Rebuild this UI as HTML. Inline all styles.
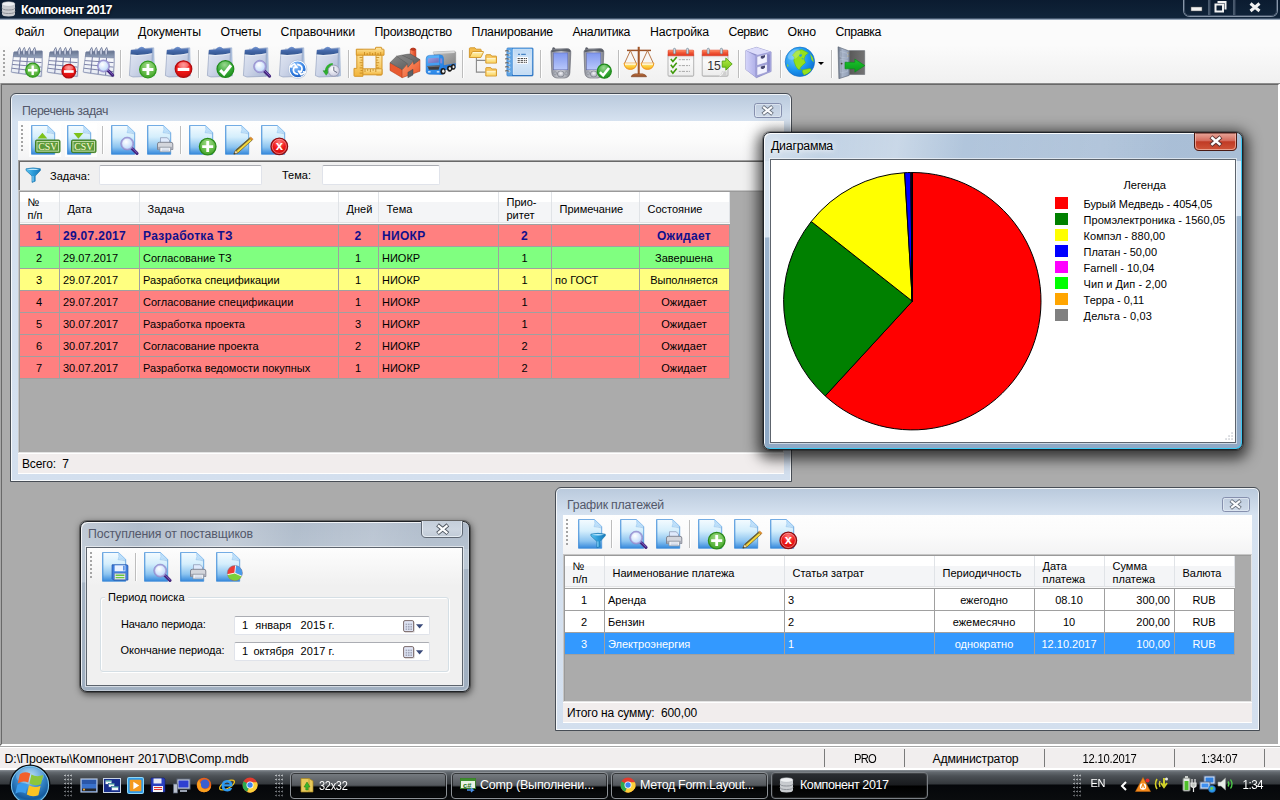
<!DOCTYPE html>
<html lang="ru"><head><meta charset="utf-8"><title>Компонент 2017</title>
<style>
html,body{margin:0;padding:0}
body{width:1280px;height:800px;overflow:hidden;position:relative;background:#ababab;font-family:"Liberation Sans",sans-serif;font-size:11px;color:#000}
div,span{position:absolute;box-sizing:border-box}
svg{position:absolute;left:0;top:0;display:block;overflow:visible}
.tx{white-space:nowrap;line-height:14px}
.t11{font-size:11px}
.t12s{font-size:12px;letter-spacing:-0.2px}
.ttl{font-size:12.5px;color:#fff;font-weight:bold;letter-spacing:-0.45px;text-shadow:0 0 3px #000}
.menu{font-size:12.3px;color:#000;letter-spacing:-0.1px}
.wt{font-size:12.3px;color:#53586a;letter-spacing:-0.45px}
.st{font-size:12.3px;letter-spacing:-0.25px}
.ctr{text-align:center}
#titlebar{left:0;top:0;width:1280px;height:18px;background:linear-gradient(#0b1b30,#10243a)}
#titleline{left:0;top:18px;width:1280px;height:2px;background:#97a7ba;border-top:1px solid #42556c}
#menubar{left:0;top:20px;width:1280px;height:25px;background:#fbfbfb}
#toolbar{left:0;top:45px;width:1280px;height:38px;background:linear-gradient(#fbfbfb,#f0f0f0)}
#mdi{left:0;top:83px;width:1280px;height:663px;background:#ababab;border-style:solid;border-width:2px;border-color:#696969 #fff #fff #696969;box-shadow:inset 0 0 0 0 #000}
#mdi:before{content:"";position:absolute;left:-2px;top:-2px;width:1280px;height:1px;background:#8c8c8c}
#mdi:after{content:"";position:absolute;left:-2px;top:-2px;width:1px;height:661px;background:#a8a8a8}
.grip{width:2px;background:repeating-linear-gradient(#a5a5a5 0 2px,transparent 2px 4px)}
.tsep{width:2px;border-left:1px solid #bdbdbd;border-right:1px solid #fff}
.win{border:1px solid #474d55;border-radius:6px}
.win.inact{border-radius:6px 6px 0 0}
.win.inact{background:linear-gradient(#b9c9dc,#d6e2f0 27px,#d3dfee);box-shadow:inset 0 0 0 1px rgba(255,255,255,.8)}
.win.inact2{border-radius:7px;border-color:#1f2226;background:linear-gradient(100deg,rgba(255,255,255,.2),rgba(255,255,255,0) 15%,rgba(255,255,255,.22) 38%,rgba(255,255,255,0) 55%,rgba(255,255,255,.12) 75%,rgba(255,255,255,0) 90%) 0 0/100% 27px no-repeat,linear-gradient(#b0bccb,#b6c2d0) 0 0/100% 27px no-repeat,linear-gradient(178deg,#c2cdd9 0,#bcc8d5 60px,#a6b4c4 61px,#a0afc0 100%);box-shadow:inset 1px 1px 0 rgba(255,255,255,.8),inset -1px -1px 0 rgba(255,255,255,.35),0 0 0 1px rgba(0,0,0,.3),1px 2px 6px 1px rgba(0,0,0,.5)}
.win.act{border-radius:7px;border-color:#1f2329;background:linear-gradient(100deg,rgba(255,255,255,.3),rgba(255,255,255,.08) 12%,rgba(255,255,255,.28) 28%,rgba(255,255,255,0) 42%,rgba(255,255,255,.1) 70%,rgba(255,255,255,0) 85%) 0 0/100% 28px no-repeat,linear-gradient(90deg,#c3d4e6,#b4c8de 30%,#aabfd7 70%,#a9bed6) 0 0/100% 28px no-repeat,linear-gradient(177.4deg,#dde9f5 0,#d6e3f1 104px,#9db5cf 105px,#8fa9c6 75%);box-shadow:inset 1px 1px 0 rgba(255,255,255,.9),inset -1px -1px 0 #3cc8f2,0 0 0 1px rgba(0,0,0,.25),0 4px 14px 5px rgba(0,0,0,.68)}
.client{background:#f0f0f0}
.client.bord{border:1px solid #5d646d;box-shadow:0 0 0 1px rgba(255,255,255,.55)}
.wtb{background:linear-gradient(#fefefe,#fbfbfb 50%,#f3f3f4)}
.wtb2{background:linear-gradient(#fdfdfd,#f0f0f0)}
.fpanel{background:#f0f0f0;border:1px solid;border-color:#a0a0a0 #fff #fff #a0a0a0;box-shadow:inset 1px 1px 0 #696969}
.inp{background:#fff;border:1px solid #e0e3ea;border-top-color:#abadb3;border-radius:2px}
.grid{background:#ababab;border:1px solid;border-color:#c6c6c6 #e3e3e3 #e3e3e3 #c6c6c6;box-shadow:inset 1px 1px 0 #9a9a9a}
.ghdr{background:linear-gradient(#fff 0 10px,#f4f5f7 10px 30px,#e2e3e5 30px 31px,#fafafa 31px);border-bottom:1px solid #a0a0a0}
.gh{font-size:11px;border-right:1px solid #e0e3e7}
.gh span{left:7.5px;top:11px;line-height:13px;white-space:nowrap}
.gh.two span{top:4px}
.gc{font-size:11px;border-right:1px solid #a0a0a0;border-bottom:1px solid #a0a0a0;overflow:hidden}
.gc span{top:4.5px;line-height:13px;white-space:nowrap}
.gc.l span{left:3px}
.gc.c span{left:0;right:1px;text-align:center}
.gc.r span{right:4px}
.sel1{font-weight:bold;color:#10108c}
.sel1 span{font-size:12px;letter-spacing:.3px}
.sel2{color:#fff}
.wstat{background:#f1eded;border-top:1px solid #fff;border-bottom:1px solid #fff}
.gbox{border:1px solid #d5dfe5;border-radius:3px;box-shadow:inset 1px 1px 0 #fff, 1px 1px 0 #fff}
#statusbar{left:0;top:746px;width:1280px;height:24px;background:#f1eeee;border-top:1px solid #a8a8a8;border-bottom:2px solid #fff;box-shadow:inset 0 1px 0 #fff}
.ssep{width:1px;height:18px;background:#7a7a7a}
#taskbar{left:0;top:770px;width:1280px;height:30px;background:linear-gradient(#8a9096 0,#646a70 2px,#4c5156 6px,#34383c 14px,#05070a 15px,#0a0c0e 100%)}
.tgrip{width:9px;height:24px;background:radial-gradient(circle at 1.2px 1.5px,#b4b8bc 0.8px,transparent 1.2px);background-size:3px 4px;-webkit-mask-image:linear-gradient(#000,rgba(0,0,0,.45))}
.tbtn{border:1px solid #8c9196;border-radius:4px;background:linear-gradient(#787d82,#55595e 12px,#3e4246 13px,#020304 14px,#0a0c0e);box-shadow:inset 0 0 0 1px rgba(0,0,0,.55)}
.tbtn.on{border-color:#7a7f84;background:linear-gradient(#2c2f33,#1a1c1f 12px,#000 13px,#08090a);box-shadow:inset 0 0 0 1px rgba(255,255,255,.1)}
.tb{color:#fff;font-size:12.5px;letter-spacing:-0.35px}

</style></head>
<body>
<svg width="0" height="0" style="position:absolute"><defs>
<linearGradient id="gDoc" x1="0" y1="0" x2="0" y2="1"><stop offset="0" stop-color="#f4fbff"/><stop offset=".4" stop-color="#d4eefc"/><stop offset=".75" stop-color="#8cc4f0"/><stop offset="1" stop-color="#3488dc"/></linearGradient>
<radialGradient id="gGreen" cx=".4" cy=".3" r=".8"><stop offset="0" stop-color="#9be07a"/><stop offset=".6" stop-color="#3fae2a"/><stop offset="1" stop-color="#1f7d16"/></radialGradient>
<radialGradient id="gRed" cx=".4" cy=".3" r=".8"><stop offset="0" stop-color="#ff8a8a"/><stop offset=".55" stop-color="#ee1c24"/><stop offset="1" stop-color="#a80d12"/></radialGradient>
<radialGradient id="gBlueB" cx=".4" cy=".3" r=".8"><stop offset="0" stop-color="#9ccbff"/><stop offset=".6" stop-color="#2f7de0"/><stop offset="1" stop-color="#1248a8"/></radialGradient>
<radialGradient id="gLens" cx=".4" cy=".35" r=".7"><stop offset="0" stop-color="#ffffff"/><stop offset="1" stop-color="#b9d6fb"/></radialGradient>
<linearGradient id="gClip" x1="0" y1="0" x2="1" y2="1"><stop offset="0" stop-color="#e4e9f4"/><stop offset=".5" stop-color="#cdd5e8"/><stop offset="1" stop-color="#a9b6d4"/></linearGradient>
<linearGradient id="gCal" x1="0" y1="0" x2="0" y2="1"><stop offset="0" stop-color="#ffffff"/><stop offset="1" stop-color="#e4e9f2"/></linearGradient>
<linearGradient id="gGold" x1="0" y1="0" x2="0" y2="1"><stop offset="0" stop-color="#ffe9a6"/><stop offset="1" stop-color="#f2b43a"/></linearGradient>
<linearGradient id="gPda" x1="0" y1="0" x2="1" y2="0"><stop offset="0" stop-color="#8d9099"/><stop offset=".5" stop-color="#d9dbe0"/><stop offset="1" stop-color="#7d808a"/></linearGradient>
<linearGradient id="gScr" x1="0" y1="0" x2="0" y2="1"><stop offset="0" stop-color="#7f97ee"/><stop offset="1" stop-color="#b9c8fb"/></linearGradient>
<radialGradient id="gGlobe" cx=".35" cy=".35" r=".8"><stop offset="0" stop-color="#6cc8fc"/><stop offset=".55" stop-color="#1a96f0"/><stop offset="1" stop-color="#0a62c8"/></radialGradient>
<linearGradient id="gCab" x1="0" y1="0" x2="1" y2="0"><stop offset="0" stop-color="#d4d4fa"/><stop offset="1" stop-color="#b0b0e8"/></linearGradient>
<linearGradient id="gRedTop" x1="0" y1="0" x2="0" y2="1"><stop offset="0" stop-color="#ff7a50"/><stop offset="1" stop-color="#e0311a"/></linearGradient>
<linearGradient id="gCloseRed" x1="0" y1="0" x2="0" y2="1"><stop offset="0" stop-color="#e9a79b"/><stop offset=".45" stop-color="#d3695a"/><stop offset=".5" stop-color="#c03a25"/><stop offset="1" stop-color="#d0563a"/></linearGradient>
<linearGradient id="gOrb" x1="0" y1="0" x2="0" y2="1"><stop offset="0" stop-color="#8fc4f2"/><stop offset=".5" stop-color="#2a6fc4"/><stop offset="1" stop-color="#1a3f86"/></linearGradient>
<radialGradient id="gGreen2" cx=".5" cy=".3" r=".75"><stop offset="0" stop-color="#a4dc8c"/><stop offset=".7" stop-color="#58b43c"/><stop offset="1" stop-color="#3f9a28"/></radialGradient>
<radialGradient id="gRed2" cx=".5" cy=".25" r=".8"><stop offset="0" stop-color="#ff7a7a"/><stop offset=".5" stop-color="#f01818"/><stop offset="1" stop-color="#c80a0a"/></radialGradient>
<linearGradient id="gFun" x1="0" y1="0" x2="1" y2="0"><stop offset="0" stop-color="#5cc4f0"/><stop offset=".5" stop-color="#2a9ad8"/><stop offset="1" stop-color="#1a7ab8"/></linearGradient>
<radialGradient id="gGreen3" cx=".45" cy=".25" r=".8"><stop offset="0" stop-color="#9ad890"/><stop offset=".6" stop-color="#34a834"/><stop offset="1" stop-color="#1c8a1c"/></radialGradient>
<radialGradient id="gClock" cx=".4" cy=".35" r=".7"><stop offset="0" stop-color="#ffffff"/><stop offset="1" stop-color="#c4c6dc"/></radialGradient>
<linearGradient id="gCalBand" x1="0" y1="0" x2="0" y2="1"><stop offset="0" stop-color="#66748f"/><stop offset="1" stop-color="#94a2bc"/></linearGradient>
<linearGradient id="gClipBand" x1="0" y1="0" x2="0" y2="1"><stop offset="0" stop-color="#7a9ad4"/><stop offset=".5" stop-color="#4468aa"/><stop offset="1" stop-color="#33558f"/></linearGradient>
<linearGradient id="gChim" x1="0" y1="0" x2="1" y2="0"><stop offset="0" stop-color="#ff8a60"/><stop offset="1" stop-color="#d8401e"/></linearGradient>
<linearGradient id="gFact" x1="0" y1="0" x2="1" y2="1"><stop offset="0" stop-color="#ff9a6c"/><stop offset="1" stop-color="#e85228"/></linearGradient>
<linearGradient id="gRoof" x1="0" y1="0" x2="1" y2="1"><stop offset="0" stop-color="#8c8c8c"/><stop offset="1" stop-color="#545454"/></linearGradient>
<linearGradient id="gBox" x1="0" y1="0" x2="1" y2="1"><stop offset="0" stop-color="#c4c4c4"/><stop offset="1" stop-color="#7e7e7e"/></linearGradient>
<linearGradient id="gCab2" x1="0" y1="0" x2="0" y2="1"><stop offset="0" stop-color="#5cb4fa"/><stop offset="1" stop-color="#2a86e8"/></linearGradient>
<linearGradient id="gWind" x1="0" y1="0" x2="1" y2="1"><stop offset="0" stop-color="#a0a0e0"/><stop offset="1" stop-color="#6a6ab8"/></linearGradient>
<linearGradient id="gFold" x1="0" y1="0" x2="0" y2="1"><stop offset="0" stop-color="#fff2b8"/><stop offset="1" stop-color="#fad460"/></linearGradient>
<linearGradient id="gNbCover" x1="0" y1="0" x2="0" y2="1"><stop offset="0" stop-color="#3c8ede"/><stop offset="1" stop-color="#2f7acc"/></linearGradient>
<linearGradient id="gNbPage" x1="0" y1="0" x2="0" y2="1"><stop offset="0" stop-color="#bcd8f4"/><stop offset=".5" stop-color="#d8e8f8"/><stop offset="1" stop-color="#c4dcf4"/></linearGradient>
<radialGradient id="gPdaBtn" cx=".5" cy=".4" r=".6"><stop offset="0" stop-color="#f4f4f8"/><stop offset="1" stop-color="#a0a4b0"/></radialGradient>
<linearGradient id="gBrown" x1="0" y1="0" x2="0" y2="1"><stop offset="0" stop-color="#c47a48"/><stop offset="1" stop-color="#8a4420"/></linearGradient>
<linearGradient id="gPan" x1="0" y1="0" x2="0" y2="1"><stop offset="0" stop-color="#fff0a0"/><stop offset=".5" stop-color="#fcd040"/><stop offset="1" stop-color="#f8a820"/></linearGradient>
<linearGradient id="gPaper" x1="0" y1="0" x2="0" y2="1"><stop offset="0" stop-color="#e4e4e4"/><stop offset=".3" stop-color="#fafafa"/><stop offset="1" stop-color="#ececec"/></linearGradient>
<linearGradient id="gArrowG" x1="0" y1="0" x2="0" y2="1"><stop offset="0" stop-color="#b4ec4a"/><stop offset="1" stop-color="#6cc010"/></linearGradient>
<linearGradient id="gArrowG2" x1="0" y1="0" x2="0" y2="1"><stop offset="0" stop-color="#1cc42c"/><stop offset="1" stop-color="#0a9a1a"/></linearGradient>
<linearGradient id="gDoorIn" x1="0" y1="0" x2="1" y2="0"><stop offset="0" stop-color="#585858"/><stop offset="1" stop-color="#747474"/></linearGradient>
<linearGradient id="gDoorLeaf" x1="0" y1="0" x2="1" y2="0"><stop offset="0" stop-color="#6a7484"/><stop offset=".4" stop-color="#a8b4c8"/><stop offset="1" stop-color="#8e9cb4"/></linearGradient>
<linearGradient id="gCloseIn" x1="0" y1="0" x2="0" y2="1"><stop offset="0" stop-color="#bfcddf"/><stop offset="1" stop-color="#cfdae9"/></linearGradient>
<linearGradient id="gCloseIn2" x1="0" y1="0" x2="0" y2="1"><stop offset="0" stop-color="#c4ceda"/><stop offset=".5" stop-color="#ccd5e0"/><stop offset="1" stop-color="#c0cad6"/></linearGradient>
</defs></svg>
<div id="titlebar"></div><div id="titleline"></div>
<div style="left:2px;top:1px;width:15px;height:16px"><svg width="15" height="16" viewBox="1 0 15 16" ><path d="M1 3 V13 Q1 15.5 7.5 15.5 Q14 15.5 14 13 V3 Z" fill="#c9ccd0"/><path d="M1 6.8 Q1 9 7.5 9 Q14 9 14 6.8 M1 10.3 Q1 12.5 7.5 12.5 Q14 12.5 14 10.3" fill="none" stroke="#8e9298" stroke-width="1"/><ellipse cx="7.5" cy="3" rx="6.5" ry="2.3" fill="#eef0f2" stroke="#a9adb3" stroke-width=".5"/></svg></div>
<span class="tx ttl" style="left:21px;top:3px;letter-spacing:-0.571px;">Компонент 2017</span>
<div style="left:1183px;top:-2px;width:95px;height:19px"><svg width="95" height="19" viewBox="0 0 95 19" ><path d="M0.5 0 V12 Q0.5 18.5 7 18.5 H88 Q94.5 18.5 94.5 12 V0" fill="none" stroke="#8796a8" stroke-width="1"/><path d="M1.5 0 V12 Q1.5 17.5 7 17.5 H88 Q93.5 17.5 93.5 12 V0" fill="none" stroke="#3d4d63" stroke-width="1"/><path d="M26 0 V17 M51 0 V17" stroke="#8796a8" stroke-width="1"/><path d="M27 0 V17 M52 0 V17" stroke="#3d4d63" stroke-width="1"/><rect x="8" y="9" width="11" height="4" fill="#f2f2f2" stroke="#555" stroke-width=".5"/><path d="M34.5 4 H42.5 V11.5 M32.5 6.5 H40 V13.5 H32.5 Z" fill="none" stroke="#f2f2f2" stroke-width="2"/><path d="M67.5 5.5 L76.5 13 M76.5 5.5 L67.5 13" stroke="#f2f2f2" stroke-width="3"/></svg></div>
<div id="menubar"></div>
<span class="tx menu" style="left:15px;top:25px;letter-spacing:-0.309px;">Файл</span>
<span class="tx menu" style="left:63.5px;top:25px;letter-spacing:-0.254px;">Операции</span>
<span class="tx menu" style="left:138px;top:25px;letter-spacing:-0.043px;">Документы</span>
<span class="tx menu" style="left:220.5px;top:25px;letter-spacing:-0.336px;">Отчеты</span>
<span class="tx menu" style="left:280.5px;top:25px;letter-spacing:0.000px;">Справочники</span>
<span class="tx menu" style="left:374.5px;top:25px;letter-spacing:-0.224px;">Производство</span>
<span class="tx menu" style="left:471.5px;top:25px;letter-spacing:-0.203px;">Планирование</span>
<span class="tx menu" style="left:572.5px;top:25px;letter-spacing:-0.375px;">Аналитика</span>
<span class="tx menu" style="left:650px;top:25px;letter-spacing:-0.172px;">Настройка</span>
<span class="tx menu" style="left:728.5px;top:25px;letter-spacing:-0.435px;">Сервис</span>
<span class="tx menu" style="left:787.5px;top:25px;letter-spacing:-0.020px;">Окно</span>
<span class="tx menu" style="left:835.5px;top:25px;letter-spacing:-0.393px;">Справка</span>
<div id="toolbar"></div>
<div class="grip" style="left:3px;top:50px;height:26px"></div>
<div style="left:10px;top:47px;width:34px;height:32px"><svg width="34" height="32" viewBox="0 0 34 32" ><path d="M5 6 L33 5 L32.2 29.8 L31.1 30.3 L2 26 Z" fill="#8a94b0" opacity=".45"/><path d="M4 5 L32.1 4 Q32.6 17 31.1 29.3 L1.2 25.1 Z" fill="url(#gCal)" stroke="#7d86aa" stroke-width=".7"/><path d="M10.4 10.0 L8.7 26.2" stroke="#686e9c" stroke-width=".9"/><path d="M17.4 10.3 L16.1 27.2" stroke="#686e9c" stroke-width=".9"/><path d="M24.5 10.7 L23.6 28.2" stroke="#686e9c" stroke-width=".9"/><path d="M2.8 13.6 L31.5 15.6" stroke="#70769f" stroke-width=".9"/><path d="M2.2 17.4 L31.4 20.1" stroke="#70769f" stroke-width=".9"/><path d="M1.7 21.2 L31.2 24.7" stroke="#70769f" stroke-width=".9"/><path d="M4 5 L32.1 4 L31.7 11 L3.3 9.7 Z" fill="url(#gCalBand)" stroke="#6a7696" stroke-width=".5"/><path d="M7.9 7.6 Q7.3 2.6 9.7 0.5 Q11.1 2.4 10.5 7.4" fill="#aab4cc" stroke="#5e6a8a" stroke-width=".8"/><path d="M9.1 6.6 Q8.7 3.2 9.8 1.6" fill="none" stroke="#eef1f8" stroke-width=".7"/><path d="M12.6 7.6 Q12.0 2.6 14.4 0.5 Q15.8 2.4 15.2 7.4" fill="#aab4cc" stroke="#5e6a8a" stroke-width=".8"/><path d="M13.8 6.6 Q13.4 3.2 14.5 1.6" fill="none" stroke="#eef1f8" stroke-width=".7"/><path d="M17.8 7.6 Q17.2 2.6 19.6 0.5 Q21.0 2.4 20.4 7.4" fill="#aab4cc" stroke="#5e6a8a" stroke-width=".8"/><path d="M19.0 6.6 Q18.6 3.2 19.7 1.6" fill="none" stroke="#eef1f8" stroke-width=".7"/><path d="M22.9 7.6 Q22.3 2.6 24.7 0.5 Q26.1 2.4 25.5 7.4" fill="#aab4cc" stroke="#5e6a8a" stroke-width=".8"/><path d="M24.1 6.6 Q23.7 3.2 24.8 1.6" fill="none" stroke="#eef1f8" stroke-width=".7"/><circle cx="22.7" cy="23.2" r="7.0" fill="url(#gGreen2)" stroke="#2f9a1c" stroke-width="1.2"/><path d="M17.988 23.2H27.412M22.7 18.488V27.912" stroke="#fff" stroke-width="2.36"/></svg></div>
<div style="left:46px;top:47px;width:34px;height:32px"><svg width="34" height="32" viewBox="0 0 34 32" ><path d="M5 6 L33 5 L32.2 29.8 L31.1 30.3 L2 26 Z" fill="#8a94b0" opacity=".45"/><path d="M4 5 L32.1 4 Q32.6 17 31.1 29.3 L1.2 25.1 Z" fill="url(#gCal)" stroke="#7d86aa" stroke-width=".7"/><path d="M10.4 10.0 L8.7 26.2" stroke="#686e9c" stroke-width=".9"/><path d="M17.4 10.3 L16.1 27.2" stroke="#686e9c" stroke-width=".9"/><path d="M24.5 10.7 L23.6 28.2" stroke="#686e9c" stroke-width=".9"/><path d="M2.8 13.6 L31.5 15.6" stroke="#70769f" stroke-width=".9"/><path d="M2.2 17.4 L31.4 20.1" stroke="#70769f" stroke-width=".9"/><path d="M1.7 21.2 L31.2 24.7" stroke="#70769f" stroke-width=".9"/><path d="M4 5 L32.1 4 L31.7 11 L3.3 9.7 Z" fill="url(#gCalBand)" stroke="#6a7696" stroke-width=".5"/><path d="M7.9 7.6 Q7.3 2.6 9.7 0.5 Q11.1 2.4 10.5 7.4" fill="#aab4cc" stroke="#5e6a8a" stroke-width=".8"/><path d="M9.1 6.6 Q8.7 3.2 9.8 1.6" fill="none" stroke="#eef1f8" stroke-width=".7"/><path d="M12.6 7.6 Q12.0 2.6 14.4 0.5 Q15.8 2.4 15.2 7.4" fill="#aab4cc" stroke="#5e6a8a" stroke-width=".8"/><path d="M13.8 6.6 Q13.4 3.2 14.5 1.6" fill="none" stroke="#eef1f8" stroke-width=".7"/><path d="M17.8 7.6 Q17.2 2.6 19.6 0.5 Q21.0 2.4 20.4 7.4" fill="#aab4cc" stroke="#5e6a8a" stroke-width=".8"/><path d="M19.0 6.6 Q18.6 3.2 19.7 1.6" fill="none" stroke="#eef1f8" stroke-width=".7"/><path d="M22.9 7.6 Q22.3 2.6 24.7 0.5 Q26.1 2.4 25.5 7.4" fill="#aab4cc" stroke="#5e6a8a" stroke-width=".8"/><path d="M24.1 6.6 Q23.7 3.2 24.8 1.6" fill="none" stroke="#eef1f8" stroke-width=".7"/><circle cx="22.8" cy="24.2" r="6.800000000000001" fill="url(#gRed2)" stroke="#b00c10" stroke-width="1.2"/><ellipse cx="22.8" cy="20.869999999999997" rx="4.44" ry="2.3680000000000003" fill="#fff" opacity=".25"/><path d="M17.916 24.5H27.684" stroke="#fff" stroke-width="2.66"/></svg></div>
<div style="left:82px;top:47px;width:34px;height:32px"><svg width="34" height="32" viewBox="0 0 34 32" ><path d="M5 6 L33 5 L32.2 29.8 L31.1 30.3 L2 26 Z" fill="#8a94b0" opacity=".45"/><path d="M4 5 L32.1 4 Q32.6 17 31.1 29.3 L1.2 25.1 Z" fill="url(#gCal)" stroke="#7d86aa" stroke-width=".7"/><path d="M10.4 10.0 L8.7 26.2" stroke="#686e9c" stroke-width=".9"/><path d="M17.4 10.3 L16.1 27.2" stroke="#686e9c" stroke-width=".9"/><path d="M24.5 10.7 L23.6 28.2" stroke="#686e9c" stroke-width=".9"/><path d="M2.8 13.6 L31.5 15.6" stroke="#70769f" stroke-width=".9"/><path d="M2.2 17.4 L31.4 20.1" stroke="#70769f" stroke-width=".9"/><path d="M1.7 21.2 L31.2 24.7" stroke="#70769f" stroke-width=".9"/><path d="M4 5 L32.1 4 L31.7 11 L3.3 9.7 Z" fill="url(#gCalBand)" stroke="#6a7696" stroke-width=".5"/><path d="M7.9 7.6 Q7.3 2.6 9.7 0.5 Q11.1 2.4 10.5 7.4" fill="#aab4cc" stroke="#5e6a8a" stroke-width=".8"/><path d="M9.1 6.6 Q8.7 3.2 9.8 1.6" fill="none" stroke="#eef1f8" stroke-width=".7"/><path d="M12.6 7.6 Q12.0 2.6 14.4 0.5 Q15.8 2.4 15.2 7.4" fill="#aab4cc" stroke="#5e6a8a" stroke-width=".8"/><path d="M13.8 6.6 Q13.4 3.2 14.5 1.6" fill="none" stroke="#eef1f8" stroke-width=".7"/><path d="M17.8 7.6 Q17.2 2.6 19.6 0.5 Q21.0 2.4 20.4 7.4" fill="#aab4cc" stroke="#5e6a8a" stroke-width=".8"/><path d="M19.0 6.6 Q18.6 3.2 19.7 1.6" fill="none" stroke="#eef1f8" stroke-width=".7"/><path d="M22.9 7.6 Q22.3 2.6 24.7 0.5 Q26.1 2.4 25.5 7.4" fill="#aab4cc" stroke="#5e6a8a" stroke-width=".8"/><path d="M24.1 6.6 Q23.7 3.2 24.8 1.6" fill="none" stroke="#eef1f8" stroke-width=".7"/><path d="M25.387999999999998 22.887999999999998L30.587999999999997 28.087999999999997" stroke="#46287e" stroke-width="3.2" stroke-linecap="round"/><path d="M25.688 22.587999999999997L30.587999999999997 27.487999999999996" stroke="#7c5cc0" stroke-width="1" stroke-linecap="round"/><circle cx="21.5" cy="19" r="5.4" fill="url(#gLens)" stroke="#a9a4dc" stroke-width="1.5"/><circle cx="21.5" cy="19" r="6.1000000000000005" fill="none" stroke="#7d78c0" stroke-width=".5"/></svg></div>
<div class="tsep" style="left:120px;top:50px;height:28px"></div>
<div style="left:127px;top:47px;width:34px;height:32px"><svg width="34" height="32" viewBox="0 0 34 32" ><path d="M8 2.2 L26.8 0.8 L27.5 28.8 L24.9 29.3 L24.9 3 Z" fill="#b4c6e2" stroke="#8fa4c8" stroke-width=".5"/><path d="M4 3.1 L25.3 1.2 L24.9 29.3 L6 30 L2.4 28.6 Z" fill="url(#gClip)" stroke="#8a98b8" stroke-width=".6"/><path d="M4 3.1 L10.5 2.6 Q12.5 -0.3 14.6 -0.3 Q16.6 -0.3 18.4 1.9 L25.3 1.2 L25.2 6.2 Q15 8.6 3.6 7.6 Z" fill="url(#gClipBand)"/><path d="M3.6 7.6 Q15 8.6 25.2 6.2 L25.2 7.2 Q15 9.6 3.5 8.6Z" fill="#eef2fa" opacity=".7"/><circle cx="20.9" cy="22.5" r="8.3" fill="url(#gGreen2)" stroke="#2f9a1c" stroke-width="1.2"/><path d="M15.381999999999998 22.5H26.418M20.9 16.982V28.018" stroke="#fff" stroke-width="2.76"/></svg></div>
<div style="left:163px;top:47px;width:34px;height:32px"><svg width="34" height="32" viewBox="0 0 34 32" ><path d="M8 2.2 L26.8 0.8 L27.5 28.8 L24.9 29.3 L24.9 3 Z" fill="#b4c6e2" stroke="#8fa4c8" stroke-width=".5"/><path d="M4 3.1 L25.3 1.2 L24.9 29.3 L6 30 L2.4 28.6 Z" fill="url(#gClip)" stroke="#8a98b8" stroke-width=".6"/><path d="M4 3.1 L10.5 2.6 Q12.5 -0.3 14.6 -0.3 Q16.6 -0.3 18.4 1.9 L25.3 1.2 L25.2 6.2 Q15 8.6 3.6 7.6 Z" fill="url(#gClipBand)"/><path d="M3.6 7.6 Q15 8.6 25.2 6.2 L25.2 7.2 Q15 9.6 3.5 8.6Z" fill="#eef2fa" opacity=".7"/><circle cx="20.5" cy="22.1" r="8.3" fill="url(#gRed2)" stroke="#b00c10" stroke-width="1.2"/><ellipse cx="20.5" cy="18.095000000000002" rx="5.34" ry="2.8480000000000003" fill="#fff" opacity=".25"/><path d="M14.626 22.400000000000002H26.374000000000002" stroke="#fff" stroke-width="3.20"/></svg></div>
<div class="tsep" style="left:198px;top:50px;height:28px"></div>
<div style="left:205px;top:47px;width:34px;height:32px"><svg width="34" height="32" viewBox="0 0 34 32" ><path d="M8 2.2 L26.8 0.8 L27.5 28.8 L24.9 29.3 L24.9 3 Z" fill="#b4c6e2" stroke="#8fa4c8" stroke-width=".5"/><path d="M4 3.1 L25.3 1.2 L24.9 29.3 L6 30 L2.4 28.6 Z" fill="url(#gClip)" stroke="#8a98b8" stroke-width=".6"/><path d="M4 3.1 L10.5 2.6 Q12.5 -0.3 14.6 -0.3 Q16.6 -0.3 18.4 1.9 L25.3 1.2 L25.2 6.2 Q15 8.6 3.6 7.6 Z" fill="url(#gClipBand)"/><path d="M3.6 7.6 Q15 8.6 25.2 6.2 L25.2 7.2 Q15 9.6 3.5 8.6Z" fill="#eef2fa" opacity=".7"/><circle cx="20.4" cy="22.1" r="8.4" fill="url(#gGreen3)" stroke="#1f8a1a" stroke-width="1.2"/><path d="M15.18 23.18L19.049999999999997 27.05L25.979999999999997 18.32" fill="none" stroke="#fff" stroke-width="3.06" stroke-linejoin="miter"/></svg></div>
<div style="left:241px;top:47px;width:34px;height:32px"><svg width="34" height="32" viewBox="0 0 34 32" ><path d="M8 2.2 L26.8 0.8 L27.5 28.8 L24.9 29.3 L24.9 3 Z" fill="#b4c6e2" stroke="#8fa4c8" stroke-width=".5"/><path d="M4 3.1 L25.3 1.2 L24.9 29.3 L6 30 L2.4 28.6 Z" fill="url(#gClip)" stroke="#8a98b8" stroke-width=".6"/><path d="M4 3.1 L10.5 2.6 Q12.5 -0.3 14.6 -0.3 Q16.6 -0.3 18.4 1.9 L25.3 1.2 L25.2 6.2 Q15 8.6 3.6 7.6 Z" fill="url(#gClipBand)"/><path d="M3.6 7.6 Q15 8.6 25.2 6.2 L25.2 7.2 Q15 9.6 3.5 8.6Z" fill="#eef2fa" opacity=".7"/><path d="M22.932 23.532L28.531999999999996 29.131999999999998" stroke="#46287e" stroke-width="3.2" stroke-linecap="round"/><path d="M23.232 23.232L28.531999999999996 28.531999999999996" stroke="#7c5cc0" stroke-width="1" stroke-linecap="round"/><circle cx="18.9" cy="19.5" r="5.6" fill="url(#gLens)" stroke="#a9a4dc" stroke-width="1.5"/><circle cx="18.9" cy="19.5" r="6.3" fill="none" stroke="#7d78c0" stroke-width=".5"/></svg></div>
<div style="left:277px;top:47px;width:34px;height:32px"><svg width="34" height="32" viewBox="0 0 34 32" ><path d="M8 2.2 L26.8 0.8 L27.5 28.8 L24.9 29.3 L24.9 3 Z" fill="#b4c6e2" stroke="#8fa4c8" stroke-width=".5"/><path d="M4 3.1 L25.3 1.2 L24.9 29.3 L6 30 L2.4 28.6 Z" fill="url(#gClip)" stroke="#8a98b8" stroke-width=".6"/><path d="M4 3.1 L10.5 2.6 Q12.5 -0.3 14.6 -0.3 Q16.6 -0.3 18.4 1.9 L25.3 1.2 L25.2 6.2 Q15 8.6 3.6 7.6 Z" fill="url(#gClipBand)"/><path d="M3.6 7.6 Q15 8.6 25.2 6.2 L25.2 7.2 Q15 9.6 3.5 8.6Z" fill="#eef2fa" opacity=".7"/><circle cx="20.7" cy="22.3" r="8.5" fill="url(#gBlueB)" stroke="#fff" stroke-width="1.2"/><circle cx="20.7" cy="22.3" r="9.2" fill="none" stroke="#9ab0d0" stroke-width=".5"/><path d="M20.2 17.35 q6.75 0.9 4.05 7.2 l-2.88 -0.45 l2.6999999999999997 3.6 l4.05 -2.6999999999999997 l-2.25 -0.27" fill="none" stroke="#fff" stroke-width="1.7" stroke-linejoin="round"/><path d="M21.2 27.25 q-6.75 -0.9 -4.05 -7.2 l2.88 0.45 l-2.6999999999999997 -3.6 l-4.05 2.6999999999999997 l2.25 0.27" fill="none" stroke="#fff" stroke-width="1.7" stroke-linejoin="round"/></svg></div>
<div style="left:313px;top:47px;width:34px;height:32px"><svg width="34" height="32" viewBox="0 0 34 32" ><path d="M8 2.2 L26.8 0.8 L27.5 28.8 L24.9 29.3 L24.9 3 Z" fill="#b4c6e2" stroke="#8fa4c8" stroke-width=".5"/><path d="M4 3.1 L25.3 1.2 L24.9 29.3 L6 30 L2.4 28.6 Z" fill="url(#gClip)" stroke="#8a98b8" stroke-width=".6"/><path d="M4 3.1 L10.5 2.6 Q12.5 -0.3 14.6 -0.3 Q16.6 -0.3 18.4 1.9 L25.3 1.2 L25.2 6.2 Q15 8.6 3.6 7.6 Z" fill="url(#gClipBand)"/><path d="M3.6 7.6 Q15 8.6 25.2 6.2 L25.2 7.2 Q15 9.6 3.5 8.6Z" fill="#eef2fa" opacity=".7"/><path d="M19.8 17.6 A7.1 7.1 0 0 0 13.200000000000001 24.7" fill="none" stroke="#2fb02f" stroke-width="3.2"/><path d="M10.0 23.7 h6.4 l-3.2 4.6z" fill="#2fb02f" stroke="#1f8a1f" stroke-width=".4"/><circle cx="20.8" cy="23.7" r="5.6" fill="url(#gClock)" stroke="#9a9cb4" stroke-width=".9"/><path d="M20.8 19.78V23.7L24.16 25.66" fill="none" stroke="#666a80" stroke-width="1"/></svg></div>
<div class="tsep" style="left:348px;top:50px;height:28px"></div>
<div style="left:353px;top:47px;width:34px;height:32px"><svg width="34" height="32" viewBox="0 0 34 32" ><rect x="23" y="8" width="6" height="20" rx=".8" fill="url(#gGold)" stroke="#d4962a" stroke-width="1" stroke-linejoin="round"/><rect x="3.3" y="21.8" width="25.7" height="6" rx=".8" fill="url(#gGold)" stroke="#d4962a" stroke-width="1" stroke-linejoin="round"/><path d="M1 21.4 H3.8 V2.6 H9.9 V29.3 H1.6 Q1 29.3 1 28.6 Z" fill="url(#gGold)" stroke="#d4962a" stroke-width="1" stroke-linejoin="round"/><path d="M3.3 2.2 H22.5 V0.6 Q22.5 0.3 23 0.3 H28.2 Q28.7 0.3 28.7 0.8 V2.2 H30.4 Q31 2.2 31 2.8 V8.2 H3.3 Z" fill="url(#gGold)" stroke="#d4962a" stroke-width="1" stroke-linejoin="round"/><path d="M11.5 8v-3" stroke="#c2841c" stroke-width=".8"/><path d="M9.6 10.5h-3" stroke="#c2841c" stroke-width=".8"/><path d="M14.2 8v-2" stroke="#c2841c" stroke-width=".8"/><path d="M9.6 13.1h-2" stroke="#c2841c" stroke-width=".8"/><path d="M16.9 8v-3" stroke="#c2841c" stroke-width=".8"/><path d="M9.6 15.7h-3" stroke="#c2841c" stroke-width=".8"/><path d="M19.6 8v-2" stroke="#c2841c" stroke-width=".8"/><path d="M9.6 18.3h-2" stroke="#c2841c" stroke-width=".8"/><path d="M22.3 8v-3" stroke="#c2841c" stroke-width=".8"/><path d="M9.6 20.9h-3" stroke="#c2841c" stroke-width=".8"/><path d="M25.0 8v-2" stroke="#c2841c" stroke-width=".8"/><path d="M9.6 23.5h-2" stroke="#c2841c" stroke-width=".8"/><path d="M27.7 8v-3" stroke="#c2841c" stroke-width=".8"/><path d="M9.6 26.1h-3" stroke="#c2841c" stroke-width=".8"/><path d="M12.0 22v3" stroke="#c2841c" stroke-width=".8"/><path d="M23.2 10.5h3" stroke="#c2841c" stroke-width=".8"/><path d="M14.7 22v2" stroke="#c2841c" stroke-width=".8"/><path d="M23.2 13.1h2" stroke="#c2841c" stroke-width=".8"/><path d="M17.4 22v3" stroke="#c2841c" stroke-width=".8"/><path d="M23.2 15.7h3" stroke="#c2841c" stroke-width=".8"/><path d="M20.1 22v2" stroke="#c2841c" stroke-width=".8"/><path d="M23.2 18.3h2" stroke="#c2841c" stroke-width=".8"/><path d="M22.8 22v3" stroke="#c2841c" stroke-width=".8"/><path d="M23.2 20.9h3" stroke="#c2841c" stroke-width=".8"/></svg></div>
<div style="left:389px;top:47px;width:34px;height:32px"><svg width="34" height="32" viewBox="0 0 34 32" ><path d="M21.2 12 L21.4 2.2 Q24 -0.2 26.8 2.2 L27 14 Z" fill="url(#gChim)" stroke="#b83a1c" stroke-width=".6"/><ellipse cx="24.1" cy="2.3" rx="2.5" ry="1.1" fill="#c23a20" stroke="#9a2a14" stroke-width=".4"/><path d="M1 15.7 L1 23.5 L13.2 30.7 L13.2 22.6 Z" fill="#e85a30" stroke="#b03c18" stroke-width=".5"/><path d="M13.2 30.7 L13.2 22.6 L18.5 16.6 L19 20.2 L24.3 13.8 L24.8 17.2 L31 12.6 L31 24.2 Z" fill="url(#gFact)" stroke="#b03c18" stroke-width=".5"/><path d="M1 15.7 L7.6 9.2 L12.8 8.2 L18 7.3 L21.5 7 L31 12.6 L24.8 17.2 L24.3 13.8 L19 20.2 L18.5 16.6 L13.2 22.6 Z" fill="url(#gRoof)" stroke="#4a4a4a" stroke-width=".5"/><path d="M7.6 9.2 L18.5 16.6 M12.8 8.2 L24.3 13.8" stroke="#555" stroke-width=".6"/><path d="M7.6 9.2 L12.8 8.2 L24.3 13.8 L19 20.2 L18.5 16.6 Z" fill="#8a8a8a" opacity=".45"/><path d="M18.9 25.3 L24 22.3 L24 28 L18.9 30.8 Z" fill="#5c6064" stroke="#3a3a3a" stroke-width=".4"/></svg></div>
<div style="left:425px;top:47px;width:34px;height:32px"><svg width="34" height="32" viewBox="0 0 34 32" ><path d="M8.2 5 L29.7 4 L30.7 5.5 L30.7 17.8 L14 21 Z" fill="url(#gBox)" stroke="#777" stroke-width=".4"/><path d="M8.2 5 L29.7 4 L29.7 6 L8.2 7 Z" fill="#d8d8d8"/><path d="M17 18.4 L30.7 16.2 L30.7 21 L17 23.8 Z" fill="#2a7ad8"/><ellipse cx="24.6" cy="21.6" rx="2.6" ry="3.1" fill="#1c1c1c"/><ellipse cx="24.9" cy="21.6" rx="1.2" ry="1.5" fill="#e8e8e8"/><ellipse cx="28.2" cy="19.9" rx="2.3" ry="2.8" fill="#1c1c1c"/><ellipse cx="28.5" cy="19.9" rx="1" ry="1.3" fill="#e8e8e8"/><path d="M1.1 12 Q1.1 8.6 4.2 8.4 L14.5 7.8 Q18.5 7.8 18.5 11.4 L18.5 25.4 Q18.5 27.2 16.6 27.4 L4 27.2 Q1.1 27 1.1 24.6 Z" fill="url(#gCab2)" stroke="#1a6ac8" stroke-width=".5"/><path d="M14.2 8 Q18.3 8 18.3 11.4 L18.3 25.4 Q18.3 27 16.6 27.2 L14.2 27.2 Z" fill="#1f7ae0" opacity=".7"/><path d="M3 12.2 Q3 11.3 4 11.2 L13 10.8 Q13.8 10.8 13.8 11.7 L13.8 15.6 L3 16.2 Z" fill="url(#gWind)"/><path d="M15.2 11.2 L17.2 11.6 L17.2 16.6 L15.2 16.2 Z" fill="#8a8ad0"/><path d="M2.5 19 L14.7 18.6 L13.7 22.8 L3.8 22.8 Z" fill="#3c3c40"/><path d="M2.5 19 L14.7 18.6 L14.4 19.8 L2.8 20.2 Z" fill="#6a6a70"/><path d="M3 24.3 h2.6 v1.2 h-2.6z M11.8 24.3 h2.6 v1.2 h-2.6z" fill="#e8f4ff"/><ellipse cx="18" cy="24.2" rx="2.6" ry="3.2" fill="#1c1c1c"/><ellipse cx="18.3" cy="24.2" rx="1.2" ry="1.6" fill="#f0f0f0"/></svg></div>
<div class="tsep" style="left:462px;top:50px;height:28px"></div>
<div style="left:467px;top:47px;width:34px;height:32px"><svg width="34" height="32" viewBox="0 0 34 32" ><path d="M9.4 11 V25.1 H18.5 M9.4 13.4 H18.5" fill="none" stroke="#8a8a8a" stroke-width="1.1"/><path d="M2.4 10.5 V1.6 Q2.4 0.8 3.2 0.8 H8 L9.2 2.2 H13.4 Q14.2 2.2 14.2 3 V4.6" fill="#f4bc4c" stroke="#d09426" stroke-width=".9" stroke-linejoin="round"/><path d="M2.4 10.5 L5.2 4.9 Q5.4 4.5 6 4.5 H16 Q16.8 4.5 16.4 5.3 L13.8 10.5 Z" fill="url(#gFold)" stroke="#d09426" stroke-width=".9" stroke-linejoin="round"/><path d="M5.9 5.5 H15.3" stroke="#fff8e0" stroke-width=".8"/><path d="M18.8 8.3 Q18.8 7.7 19.5 7.7 h4.2 l1 1.4 h4.6 Q29.5 9.1 29.5 9.9 v6.2 h-10.7 z" fill="#f8c860" stroke="#d09426" stroke-width=".9" stroke-linejoin="round"/><path d="M19.7 11.5 h8.899999999999999 v4.0 h-8.899999999999999 z" fill="url(#gFold)"/><path d="M19.7 11.5 h8.899999999999999" stroke="#fff6d8" stroke-width=".8"/><path d="M18.8 21.2 Q18.8 20.599999999999998 19.5 20.599999999999998 h4.2 l1 1.4 h4.6 Q29.5 22.0 29.5 22.8 v6.2 h-10.7 z" fill="#f8c860" stroke="#d09426" stroke-width=".9" stroke-linejoin="round"/><path d="M19.7 24.4 h8.899999999999999 v4.0 h-8.899999999999999 z" fill="url(#gFold)"/><path d="M19.7 24.4 h8.899999999999999" stroke="#fff6d8" stroke-width=".8"/></svg></div>
<div style="left:505px;top:47px;width:34px;height:32px"><svg width="34" height="32" viewBox="0 0 34 32" ><rect x="1.9" y="0.9" width="26.2" height="28.1" rx="1" fill="url(#gNbCover)" stroke="#2a6eb8" stroke-width=".6"/><rect x="2.2" y="1.2" width="4.8" height="27.5" fill="#5fa4e4"/><path d="M8 2.2 H26.7 V27.5 H8 Z" fill="url(#gNbPage)" stroke="#eaf3fc" stroke-width=".7"/><rect x="11.7" y="10.1" width="11.3" height="6.6" rx=".8" fill="#fff"/><path d="M13 7.3h2M16.2 7.3h4.6" stroke="#2a6eb8" stroke-width="1"/><path d="M12.6 11.5h2.2M15.6 11.5h2.4M18.8 11.5h1.6M21 11.5h1" stroke="#333" stroke-width=".9"/><path d="M12.6 13.4h2.2M15.6 13.4h2.4M18.8 13.4h1.6M21 13.4h1" stroke="#333" stroke-width=".9"/><path d="M12.6 15.3h2.2M15.6 15.3h2.4M18.8 15.3h1.6M21 15.3h1" stroke="#333" stroke-width=".9"/><circle cx="4.3" cy="4.4" r="1.1" fill="#dbeafa"/><path d="M0 4.0 Q2 3.0000000000000004 4.3 4.4" fill="none" stroke="#6a6258" stroke-width="1"/><circle cx="4.3" cy="8.4" r="1.1" fill="#dbeafa"/><path d="M0 8.0 Q2 7.0 4.3 8.4" fill="none" stroke="#6a6258" stroke-width="1"/><circle cx="4.3" cy="12.4" r="1.1" fill="#dbeafa"/><path d="M0 12.0 Q2 11.0 4.3 12.4" fill="none" stroke="#6a6258" stroke-width="1"/><circle cx="4.3" cy="16.4" r="1.1" fill="#dbeafa"/><path d="M0 15.999999999999998 Q2 14.999999999999998 4.3 16.4" fill="none" stroke="#6a6258" stroke-width="1"/><circle cx="4.3" cy="20.4" r="1.1" fill="#dbeafa"/><path d="M0 20.0 Q2 19.0 4.3 20.4" fill="none" stroke="#6a6258" stroke-width="1"/><circle cx="4.3" cy="24.4" r="1.1" fill="#dbeafa"/><path d="M0 24.0 Q2 23.0 4.3 24.4" fill="none" stroke="#6a6258" stroke-width="1"/></svg></div>
<div class="tsep" style="left:540px;top:50px;height:28px"></div>
<div style="left:545px;top:47px;width:34px;height:32px"><svg width="34" height="32" viewBox="0 0 34 32" ><path d="M7.3 3.5 L7.3 0.9 Q8.2 0 9.4 0.6 L10.6 2.2 Z" fill="#5a5e68"/><path d="M6 6.2 Q5.4 2.2 9.5 2 L22 1.6 Q26.2 1.8 25.8 6 L24.9 25.5 Q24.6 30.6 19.5 31 L12 31 Q7.2 30.6 6.8 25.5 Z" fill="url(#gPda)" stroke="#5f626c" stroke-width=".6"/><path d="M6.4 5.2 Q6.4 2.6 9.5 2.5 L22 2.1 Q25.4 2.3 25.4 5 Q15.5 3.6 6.4 5.2Z" fill="#4e525c" opacity=".85"/><rect x="8.7" y="5.9" width="14.1" height="16.9" fill="url(#gScr)" stroke="#5a62a8" stroke-width=".5"/><ellipse cx="15.75" cy="27" rx="3.4" ry="3.1" fill="url(#gPdaBtn)" stroke="#70747e" stroke-width=".6"/><circle cx="10.2" cy="26.2" r="1.5" fill="#aeb2bc" stroke="#7a7e88" stroke-width=".4"/><circle cx="21.3" cy="26.2" r="1.5" fill="#aeb2bc" stroke="#7a7e88" stroke-width=".4"/></svg></div>
<div style="left:581px;top:47px;width:34px;height:32px"><svg width="34" height="32" viewBox="0 0 34 32" ><g transform="translate(-3,0)"><path d="M7.3 3.5 L7.3 0.9 Q8.2 0 9.4 0.6 L10.6 2.2 Z" fill="#5a5e68"/><path d="M6 6.2 Q5.4 2.2 9.5 2 L22 1.6 Q26.2 1.8 25.8 6 L24.9 25.5 Q24.6 30.6 19.5 31 L12 31 Q7.2 30.6 6.8 25.5 Z" fill="url(#gPda)" stroke="#5f626c" stroke-width=".6"/><path d="M6.4 5.2 Q6.4 2.6 9.5 2.5 L22 2.1 Q25.4 2.3 25.4 5 Q15.5 3.6 6.4 5.2Z" fill="#4e525c" opacity=".85"/><rect x="8.7" y="5.9" width="14.1" height="16.9" fill="url(#gScr)" stroke="#5a62a8" stroke-width=".5"/><ellipse cx="15.75" cy="27" rx="3.4" ry="3.1" fill="url(#gPdaBtn)" stroke="#70747e" stroke-width=".6"/><circle cx="10.2" cy="26.2" r="1.5" fill="#aeb2bc" stroke="#7a7e88" stroke-width=".4"/><circle cx="21.3" cy="26.2" r="1.5" fill="#aeb2bc" stroke="#7a7e88" stroke-width=".4"/></g><circle cx="23.3" cy="24.2" r="7.0" fill="url(#gGreen3)" stroke="#1f8a1a" stroke-width="1.2"/><path d="M18.892000000000003 25.112L22.16 28.38L28.012 21.008" fill="none" stroke="#fff" stroke-width="2.58" stroke-linejoin="miter"/></svg></div>
<div class="tsep" style="left:618px;top:50px;height:28px"></div>
<div style="left:622px;top:47px;width:34px;height:32px"><svg width="34" height="32" viewBox="0 0 34 32" ><path d="M16.7 -0.2 V27" stroke="#9a5228" stroke-width="2"/><path d="M17.3 0 V27" stroke="#c87a48" stroke-width=".6"/><path d="M5 3.4 H29" stroke="#9a5228" stroke-width="1.5"/><path d="M9.2 29.8 Q9.4 27.6 13 26.8 L20.6 26.8 Q24.2 27.6 24.6 29.8 Z" fill="url(#gBrown)" stroke="#7a3a18" stroke-width=".5"/><path d="M8.4 3.6 L2.6000000000000005 16.2 M8.4 3.6 L14.2 16.2" stroke="#b06a38" stroke-width=".9" fill="none"/><path d="M2.0 16.2 H14.8 Q14.0 22.4 8.4 22.4 Q2.8000000000000007 22.4 2.0 16.2 Z" fill="url(#gPan)" stroke="#f0981c" stroke-width="1"/><path d="M3.0 17 H13.8" stroke="#fff" stroke-width="1.2"/><path d="M25.5 3.6 L19.7 16.2 M25.5 3.6 L31.3 16.2" stroke="#b06a38" stroke-width=".9" fill="none"/><path d="M19.1 16.2 H31.9 Q31.1 22.4 25.5 22.4 Q19.9 22.4 19.1 16.2 Z" fill="url(#gPan)" stroke="#f0981c" stroke-width="1"/><path d="M20.1 17 H30.9" stroke="#fff" stroke-width="1.2"/></svg></div>
<div style="left:665px;top:47px;width:34px;height:32px"><svg width="34" height="32" viewBox="0 0 34 32" ><rect x="3.3" y="8" width="25.099999999999998" height="21.6" rx=".8" fill="#8a8a8a" opacity=".5"/><rect x="3" y="7" width="25.7" height="22" rx=".8" fill="url(#gPaper)" stroke="#9c9c9c" stroke-width=".7"/><path d="M3 3.9 Q3 3.1 3.8 3.1 H27.9 Q28.7 3.1 28.7 3.9 V8.8 H3 Z" fill="url(#gRedTop)" stroke="#d8341c" stroke-width=".5"/><path d="M3.6 3.8 H28.099999999999998" stroke="#ff9a7a" stroke-width=".7"/><rect x="8.4" y="1.2" width="2.2" height="5.8" rx="1.1" fill="#aebcc8" stroke="#6a7a88" stroke-width=".5"/><path d="M9.3 2 V6.2" stroke="#eef4f8" stroke-width=".7"/><rect x="21.4" y="1.2" width="2.2" height="5.8" rx="1.1" fill="#aebcc8" stroke="#6a7a88" stroke-width=".5"/><path d="M22.3 2 V6.2" stroke="#eef4f8" stroke-width=".7"/><path d="M5.8 11.9 l2.1 2.6 l3.8 -4.6" fill="none" stroke="#3f9a0a" stroke-width="1.6"/><path d="M13.8 12.7h2M16.8 12.7h3.2M21 12.7h2.2M24 12.7h1" stroke="#a8a8a8" stroke-width="1"/><path d="M5.8 17.799999999999997 l2.1 2.6 l3.8 -4.6" fill="none" stroke="#3f9a0a" stroke-width="1.6"/><path d="M13.8 18.599999999999998h2M16.8 18.599999999999998h3.2M21 18.599999999999998h2.2M24 18.599999999999998h1" stroke="#a8a8a8" stroke-width="1"/><path d="M5.8 23.599999999999998 l2.1 2.6 l3.8 -4.6" fill="none" stroke="#3f9a0a" stroke-width="1.6"/><path d="M13.8 24.4h2M16.8 24.4h3.2M21 24.4h2.2M24 24.4h1" stroke="#a8a8a8" stroke-width="1"/></svg></div>
<div style="left:700px;top:47px;width:34px;height:32px"><svg width="34" height="32" viewBox="0 0 34 32" ><rect x="2.5" y="8" width="25.2" height="21.6" rx=".8" fill="#8a8a8a" opacity=".5"/><rect x="2.2" y="7" width="25.8" height="22" rx=".8" fill="url(#gPaper)" stroke="#9c9c9c" stroke-width=".7"/><path d="M2.2 3.9 Q2.2 3.1 3.0 3.1 H27.2 Q28 3.1 28 3.9 V8.8 H2.2 Z" fill="url(#gRedTop)" stroke="#d8341c" stroke-width=".5"/><path d="M2.8000000000000003 3.8 H27.4" stroke="#ff9a7a" stroke-width=".7"/><rect x="7.200000000000001" y="1.2" width="2.2" height="5.8" rx="1.1" fill="#aebcc8" stroke="#6a7a88" stroke-width=".5"/><path d="M8.100000000000001 2 V6.2" stroke="#eef4f8" stroke-width=".7"/><rect x="20.299999999999997" y="1.2" width="2.2" height="5.8" rx="1.1" fill="#aebcc8" stroke="#6a7a88" stroke-width=".5"/><path d="M21.2 2 V6.2" stroke="#eef4f8" stroke-width=".7"/><path d="M18 29 Q21.5 28.5 22 24.2 L26.5 24.6 L26.5 29 Z" fill="#cfcfcf"/><path d="M19.5 29 Q23 28 23.2 24.6" fill="none" stroke="#f4f4f4" stroke-width="1"/><text x="7.2" y="22.9" font-family="Liberation Sans,sans-serif" font-size="13" fill="#333" textLength="13.6" lengthAdjust="spacingAndGlyphs">15</text><path d="M22.2 14 H25.8 V11 L32.2 17 L25.8 23.2 V20.2 H22.2 Z" fill="url(#gArrowG)" stroke="#4a9a0a" stroke-width=".8" stroke-linejoin="round"/></svg></div>
<div class="tsep" style="left:738px;top:50px;height:28px"></div>
<div style="left:743px;top:47px;width:34px;height:32px"><svg width="34" height="32" viewBox="0 0 34 32" ><path d="M2.8 3.6 L13.5 0.3 L28.1 5 L28.1 24.5 L13.5 30.7 L2.8 22.5 Z" fill="#8e8ec8" stroke="#7a7ab8" stroke-width=".5"/><path d="M2.8 3.6 L13.5 0.3 L28.1 5 L16 8.6 Z" fill="#dcdcfa"/><path d="M2.8 3.6 L12 8.6 L12.6 30 L2.8 22.5 Z" fill="url(#gCab)"/><path d="M12 8.6 L28.1 4.6 L28.1 24.5 L12.6 30.6 Z" fill="#a4a4dc"/><path d="M14 9.6 L24.3 6.8 L24.3 15.3 L14 18.6 Z" fill="#f2f2fe" stroke="#8c8cc4" stroke-width=".5"/><path d="M14 20 L24.3 17.2 L24.3 25.1 L14 28.6 Z" fill="#f2f2fe" stroke="#8c8cc4" stroke-width=".5"/><path d="M17.8 9.2 L22 8.1 L22 10 Q20 12.6 17.8 11.2 Z M17.8 19.6 L22 18.5 L22 20.4 Q20 23 17.8 21.6 Z" fill="#44446c"/><path d="M24.3 6.8 L26.8 7.8 L26.8 24 L24.3 25.1Z" fill="#8c8ccc"/></svg></div>
<div class="tsep" style="left:780px;top:50px;height:28px"></div>
<div style="left:784px;top:47px;width:34px;height:32px"><svg width="34" height="32" viewBox="0 0 34 32" ><circle cx="15.9" cy="14.8" r="14.7" fill="url(#gGlobe)" stroke="#1672c8" stroke-width=".7"/><clipPath id="gclip"><circle cx="15.9" cy="14.8" r="14.2"/></clipPath><g clip-path="url(#gclip)"><path d="M8.4 8.2 L12.2 4 L17.8 2.6 L24.4 5.9 L21.5 8.2 L20.1 12 L21.5 15.7 L17.8 19 L15.9 21.4 L17.3 22.8 L14 22.3 L11.7 19 L9.8 13.9 L10.3 10.1 Z" fill="#96e01c" stroke="#5cb80c" stroke-width=".5" stroke-linejoin="round"/><path d="M26.2 6.4 L29 11 L29.8 15.6 L27.6 12.9 L26.7 9.2 Z" fill="#96e01c"/><path d="M18.7 22.8 L26.2 21.4 L27.6 23.2 L24.4 26.5 L20.1 28.2 L18.3 25.1 Z" fill="#96e01c" stroke="#5cb80c" stroke-width=".5" stroke-linejoin="round"/><path d="M2.8 16.7 L4.7 18.6 L3.7 20.2 Z" fill="#96e01c"/><path d="M15 8 l2.5 -1 l.5 2 l-2 1z M17.5 11.5 l1.6 -.6 l.2 1.8z" fill="#2a9ae8"/></g><ellipse cx="10" cy="7.5" rx="7" ry="4.2" fill="#fff" opacity=".22" transform="rotate(-35 10 7.5)"/></svg></div>
<div class="tsep" style="left:831px;top:50px;height:28px"></div>
<div style="left:836px;top:47px;width:34px;height:32px"><svg width="34" height="32" viewBox="0 0 34 32" ><path d="M13.2 3.6 H28.7 V27.5 H13.2 Z" fill="url(#gDoorIn)" stroke="#5a6068" stroke-width=".5"/><path d="M2 -0.2 L13.2 4 L13.2 28.4 L2.9 31.7 Z" fill="url(#gDoorLeaf)" stroke="#5a6474" stroke-width=".6"/><path d="M4.2 4.4 L11.4 6.4 L11.4 11.2 L4.2 10 Z M4.2 12.4 L11.4 13.4 L11.4 24.4 L4.4 26 Z" fill="none" stroke="#c4d0e0" stroke-width=".5" opacity=".8"/><circle cx="5.6" cy="16.6" r=".9" fill="#4a4234"/><circle cx="12" cy="6" r=".5" fill="#c8a040"/><circle cx="12" cy="9" r=".5" fill="#c8a040"/><path d="M9 15.3 H18.8 V12 L28.9 18.6 L18.8 25.1 V21.8 H9 Z" fill="url(#gArrowG2)" stroke="#0a8a1a" stroke-width=".6" stroke-linejoin="round"/></svg></div>
<div style="left:818px;top:62px;width:0;height:0;border-left:3px solid transparent;border-right:3px solid transparent;border-top:3px solid #000"></div>
<div id="mdi"></div>
<div class="win inact" style="left:10px;top:93px;width:782px;height:389px;"></div>
<span class="tx wt" style="left:22px;top:104px;letter-spacing:-0.388px;">Перечень задач</span>
<div style="left:754px;top:103px;width:28px;height:15px"><svg width="28" height="15" viewBox="0 0 28 15" ><rect x="0.5" y="0.5" width="27" height="14" rx="2.2" fill="url(#gCloseIn)" stroke="#8690ae" stroke-width="1"/><rect x="1.5" y="1.5" width="25" height="12" rx="1.5" fill="none" stroke="#e4ebf4" stroke-width="1" opacity=".7"/><path d="M8.7 3.5000000000000004 L18.5 11.3 M18.5 3.5000000000000004 L8.7 11.3" stroke="#666e7a" stroke-width="4.0" stroke-linecap="butt"/><path d="M9.2 3.9000000000000004 L18.0 10.9 M18.0 3.9000000000000004 L9.2 10.9" stroke="#fafbfd" stroke-width="2.1" stroke-linecap="butt"/></svg></div>
<div class="client" style="left:18px;top:121px;width:766px;height:353px;"></div>
<div class="wtb" style="left:18px;top:121px;width:766px;height:39px;"></div>
<div class="grip" style="left:21px;top:125px;height:26px"></div>
<div style="left:29px;top:123px;width:32px;height:34px;background:rgba(255,255,255,.75)"></div>
<div style="left:65px;top:123px;width:32px;height:34px;background:rgba(255,255,255,.75)"></div>
<div style="left:31px;top:125px;width:34px;height:32px"><svg width="34" height="32" viewBox="0 0 34 32" ><path d="M0.5 0.5 H16.5 L23.7 7.5 V29.3 H0.5 Z" fill="url(#gDoc)" stroke="#3a8ad8" stroke-width=".7"/><path d="M1.2 1 V28.8" stroke="#2f7fd0" stroke-width=".6" opacity=".6"/><path d="M16.5 0.5 Q17.6 5 16 7.8 Q19.5 6.6 23.7 7.5 Z" fill="#bfe0fa" stroke="#8cc0ee" stroke-width=".5"/><path d="M16.2 8.3 Q20 7.4 23.5 8.3 L23.5 9.5 Q20 8.3 16.2 8.3Z" fill="#7fb0e0" opacity=".5"/><rect x="4.5" y="15" width="24.5" height="12.6" rx="1.3" fill="#5c9a3c" stroke="#3f7d24" stroke-width="1"/><rect x="6" y="16.5" width="21.5" height="9.6" fill="none" stroke="#e4f2d0" stroke-width=".7"/><text x="16.8" y="25.2" text-anchor="middle" font-family="Liberation Serif,serif" font-size="10" fill="#fffbd0" textLength="19" lengthAdjust="spacingAndGlyphs">CSV</text><path d="M6.5 13.6 L11.4 7.8 L16.3 13.6 Z" fill="#7dc21a"/></svg></div>
<div style="left:67px;top:125px;width:34px;height:32px"><svg width="34" height="32" viewBox="0 0 34 32" ><path d="M0.5 0.5 H16.5 L23.7 7.5 V29.3 H0.5 Z" fill="url(#gDoc)" stroke="#3a8ad8" stroke-width=".7"/><path d="M1.2 1 V28.8" stroke="#2f7fd0" stroke-width=".6" opacity=".6"/><path d="M16.5 0.5 Q17.6 5 16 7.8 Q19.5 6.6 23.7 7.5 Z" fill="#bfe0fa" stroke="#8cc0ee" stroke-width=".5"/><path d="M16.2 8.3 Q20 7.4 23.5 8.3 L23.5 9.5 Q20 8.3 16.2 8.3Z" fill="#7fb0e0" opacity=".5"/><rect x="4.5" y="15" width="24.5" height="12.6" rx="1.3" fill="#5c9a3c" stroke="#3f7d24" stroke-width="1"/><rect x="6" y="16.5" width="21.5" height="9.6" fill="none" stroke="#e4f2d0" stroke-width=".7"/><text x="16.8" y="25.2" text-anchor="middle" font-family="Liberation Serif,serif" font-size="10" fill="#fffbd0" textLength="19" lengthAdjust="spacingAndGlyphs">CSV</text><path d="M6.5 8 L16.3 8 L11.4 13.8 Z" fill="#7dc21a"/></svg></div>
<div style="left:111px;top:125px;width:34px;height:32px"><svg width="34" height="32" viewBox="0 0 34 32" ><path d="M0.5 0.5 H16.5 L23.7 7.5 V29.3 H0.5 Z" fill="url(#gDoc)" stroke="#3a8ad8" stroke-width=".7"/><path d="M1.2 1 V28.8" stroke="#2f7fd0" stroke-width=".6" opacity=".6"/><path d="M16.5 0.5 Q17.6 5 16 7.8 Q19.5 6.6 23.7 7.5 Z" fill="#bfe0fa" stroke="#8cc0ee" stroke-width=".5"/><path d="M16.2 8.3 Q20 7.4 23.5 8.3 L23.5 9.5 Q20 8.3 16.2 8.3Z" fill="#7fb0e0" opacity=".5"/><path d="M20.375999999999998 22.776000000000003L25.976 28.376000000000005" stroke="#46287e" stroke-width="3.2" stroke-linecap="round"/><path d="M20.676 22.476000000000003L25.976 27.776000000000003" stroke="#7c5cc0" stroke-width="1" stroke-linecap="round"/><circle cx="16.2" cy="18.6" r="5.8" fill="url(#gLens)" stroke="#a9a4dc" stroke-width="1.5"/><circle cx="16.2" cy="18.6" r="6.5" fill="none" stroke="#7d78c0" stroke-width=".5"/></svg></div>
<div style="left:147px;top:125px;width:34px;height:32px"><svg width="34" height="32" viewBox="0 0 34 32" ><path d="M0.5 0.5 H16.5 L23.7 7.5 V29.3 H0.5 Z" fill="url(#gDoc)" stroke="#3a8ad8" stroke-width=".7"/><path d="M1.2 1 V28.8" stroke="#2f7fd0" stroke-width=".6" opacity=".6"/><path d="M16.5 0.5 Q17.6 5 16 7.8 Q19.5 6.6 23.7 7.5 Z" fill="#bfe0fa" stroke="#8cc0ee" stroke-width=".5"/><path d="M16.2 8.3 Q20 7.4 23.5 8.3 L23.5 9.5 Q20 8.3 16.2 8.3Z" fill="#7fb0e0" opacity=".5"/><path d="M13.5 12.7 H20 L22.5 15 V19 H13.5 Z" fill="#dfeafc" stroke="#8a93b0" stroke-width=".7"/><path d="M10.5 19 Q10.5 17.3 12.2 17.3 H24 Q25.8 17.3 25.8 19 V24.5 H10.5 Z" fill="#d4d6dc" stroke="#6e7280" stroke-width=".8"/><path d="M11 21.8 H25.4 V24.5 H11 Z" fill="#a9acb8"/><path d="M13 22.3 H23.3 V26.8 H13 Z" fill="#fff" stroke="#8a8f9c" stroke-width=".7"/><path d="M14.5 24h7.5M14.5 25.4h7.5" stroke="#9fb0d0" stroke-width=".6"/></svg></div>
<div style="left:189px;top:125px;width:34px;height:32px"><svg width="34" height="32" viewBox="0 0 34 32" ><path d="M0.5 0.5 H16.5 L23.7 7.5 V29.3 H0.5 Z" fill="url(#gDoc)" stroke="#3a8ad8" stroke-width=".7"/><path d="M1.2 1 V28.8" stroke="#2f7fd0" stroke-width=".6" opacity=".6"/><path d="M16.5 0.5 Q17.6 5 16 7.8 Q19.5 6.6 23.7 7.5 Z" fill="#bfe0fa" stroke="#8cc0ee" stroke-width=".5"/><path d="M16.2 8.3 Q20 7.4 23.5 8.3 L23.5 9.5 Q20 8.3 16.2 8.3Z" fill="#7fb0e0" opacity=".5"/><circle cx="18.7" cy="21.6" r="8.3" fill="url(#gGreen2)" stroke="#2a8a1a" stroke-width="1.3"/><path d="M13.181999999999999 21.6H24.218M18.7 16.082V27.118000000000002" stroke="#fff" stroke-width="2.8"/></svg></div>
<div style="left:225px;top:125px;width:34px;height:32px"><svg width="34" height="32" viewBox="0 0 34 32" ><path d="M0.5 0.5 H16.5 L23.7 7.5 V29.3 H0.5 Z" fill="url(#gDoc)" stroke="#3a8ad8" stroke-width=".7"/><path d="M1.2 1 V28.8" stroke="#2f7fd0" stroke-width=".6" opacity=".6"/><path d="M16.5 0.5 Q17.6 5 16 7.8 Q19.5 6.6 23.7 7.5 Z" fill="#bfe0fa" stroke="#8cc0ee" stroke-width=".5"/><path d="M16.2 8.3 Q20 7.4 23.5 8.3 L23.5 9.5 Q20 8.3 16.2 8.3Z" fill="#7fb0e0" opacity=".5"/><path d="M8.9 29.1 L10.6 25.2 L24.6 13 L27 15.3 L13 27.8 Z" fill="#f6d83a" stroke="#6a5a2a" stroke-width=".7" stroke-linejoin="round"/><path d="M8.9 29.1 L10.6 25.2 L24.6 13 L25.4 13.8 L11.4 26.3 Z" fill="#3a3a3a" opacity=".75"/><path d="M24.6 13 L25.8 12 L28.2 14.3 L27 15.3 Z" fill="#f0962a" stroke="#a0601a" stroke-width=".4"/><path d="M8.9 29.1 L10.6 25.2 L13 27.8 Z" fill="#f4e4c0" stroke="#6a5a2a" stroke-width=".5"/><path d="M8.9 29.1 l.7 -1.6 l1 1 z" fill="#222"/></svg></div>
<div style="left:261px;top:125px;width:34px;height:32px"><svg width="34" height="32" viewBox="0 0 34 32" ><path d="M0.5 0.5 H16.5 L23.7 7.5 V29.3 H0.5 Z" fill="url(#gDoc)" stroke="#3a8ad8" stroke-width=".7"/><path d="M1.2 1 V28.8" stroke="#2f7fd0" stroke-width=".6" opacity=".6"/><path d="M16.5 0.5 Q17.6 5 16 7.8 Q19.5 6.6 23.7 7.5 Z" fill="#bfe0fa" stroke="#8cc0ee" stroke-width=".5"/><path d="M16.2 8.3 Q20 7.4 23.5 8.3 L23.5 9.5 Q20 8.3 16.2 8.3Z" fill="#7fb0e0" opacity=".5"/><circle cx="18.3" cy="21.4" r="8.3" fill="url(#gRed2)" stroke="#8c1014" stroke-width="1.3"/><circle cx="18.3" cy="21.4" r="7.1000000000000005" fill="none" stroke="#ffd0d0" stroke-width=".7" opacity=".7"/><text x="18.3" y="25.0" text-anchor="middle" font-family="Liberation Sans,sans-serif" font-weight="bold" font-size="13" fill="#fff">x</text></svg></div>
<div class="tsep" style="left:102px;top:126px;height:28px"></div>
<div class="tsep" style="left:180px;top:126px;height:28px"></div>
<div class="fpanel" style="left:18px;top:160px;width:766px;height:31px;"></div>
<div style="left:25px;top:167px;width:16px;height:16px"><svg width="16" height="16" viewBox="0 0 16 16" ><g transform="translate(1,1) scale(1)"><path d="M0 0.8 Q7 -1 14.4 0.8 L14.4 2.4 L9.2 8 V13.2 L6 14.4 V8 L0 2.4 Z" fill="url(#gFun)" stroke="#1f7ab0" stroke-width=".7" stroke-linejoin="round"/><path d="M1 1.4 Q7 0 13.4 1.4 Q7 2.8 1 1.4Z" fill="#bfeaff"/><path d="M7 8 V13.4" stroke="#9fdcff" stroke-width=".9"/></g></svg></div>
<span class="tx t11" style="left:50px;top:169px;">Задача:</span>
<div class="inp" style="left:99px;top:165px;width:163px;height:20px;"></div>
<span class="tx t11" style="left:282px;top:168px;">Тема:</span>
<div class="inp" style="left:322px;top:165px;width:118px;height:20px;"></div>
<div class="grid" style="left:18px;top:190px;width:766px;height:263px;"></div>
<div class="ghdr" style="left:20px;top:192px;width:710px;height:33px;"></div>
<div class="gh two" style="left:20px;top:192px;width:40px;height:31px"><span>№<br>п/п</span></div>
<div class="gh" style="left:60px;top:192px;width:80px;height:31px"><span>Дата</span></div>
<div class="gh" style="left:140px;top:192px;width:199px;height:31px"><span>Задача</span></div>
<div class="gh" style="left:339px;top:192px;width:40px;height:31px"><span>Дней</span></div>
<div class="gh" style="left:379px;top:192px;width:120px;height:31px"><span>Тема</span></div>
<div class="gh two" style="left:499px;top:192px;width:53px;height:31px"><span>Прио-<br>ритет</span></div>
<div class="gh" style="left:552px;top:192px;width:88px;height:31px"><span>Примечание</span></div>
<div class="gh" style="left:640px;top:192px;width:90px;height:31px"><span>Состояние</span></div>
<div class="gc c sel1" style="left:20px;top:225px;width:40px;height:22px;background:#ff8080"><span>1</span></div>
<div class="gc l sel1" style="left:60px;top:225px;width:80px;height:22px;background:#ff8080"><span>29.07.2017</span></div>
<div class="gc l sel1" style="left:140px;top:225px;width:199px;height:22px;background:#ff8080"><span>Разработка ТЗ</span></div>
<div class="gc c sel1" style="left:339px;top:225px;width:40px;height:22px;background:#ff8080"><span>2</span></div>
<div class="gc l sel1" style="left:379px;top:225px;width:120px;height:22px;background:#ff8080"><span>НИОКР</span></div>
<div class="gc c sel1" style="left:499px;top:225px;width:53px;height:22px;background:#ff8080"><span>2</span></div>
<div class="gc l sel1" style="left:552px;top:225px;width:88px;height:22px;background:#ff8080"><span></span></div>
<div class="gc c sel1" style="left:640px;top:225px;width:90px;height:22px;background:#ff8080"><span>Ожидает</span></div>
<div class="gc c" style="left:20px;top:247px;width:40px;height:22px;background:#80ff80"><span>2</span></div>
<div class="gc l" style="left:60px;top:247px;width:80px;height:22px;background:#80ff80"><span>29.07.2017</span></div>
<div class="gc l" style="left:140px;top:247px;width:199px;height:22px;background:#80ff80"><span>Согласование ТЗ</span></div>
<div class="gc c" style="left:339px;top:247px;width:40px;height:22px;background:#80ff80"><span>1</span></div>
<div class="gc l" style="left:379px;top:247px;width:120px;height:22px;background:#80ff80"><span>НИОКР</span></div>
<div class="gc c" style="left:499px;top:247px;width:53px;height:22px;background:#80ff80"><span>1</span></div>
<div class="gc l" style="left:552px;top:247px;width:88px;height:22px;background:#80ff80"><span></span></div>
<div class="gc c" style="left:640px;top:247px;width:90px;height:22px;background:#80ff80"><span>Завершена</span></div>
<div class="gc c" style="left:20px;top:269px;width:40px;height:22px;background:#ffff80"><span>3</span></div>
<div class="gc l" style="left:60px;top:269px;width:80px;height:22px;background:#ffff80"><span>29.07.2017</span></div>
<div class="gc l" style="left:140px;top:269px;width:199px;height:22px;background:#ffff80"><span>Разработка спецификации</span></div>
<div class="gc c" style="left:339px;top:269px;width:40px;height:22px;background:#ffff80"><span>1</span></div>
<div class="gc l" style="left:379px;top:269px;width:120px;height:22px;background:#ffff80"><span>НИОКР</span></div>
<div class="gc c" style="left:499px;top:269px;width:53px;height:22px;background:#ffff80"><span>1</span></div>
<div class="gc l" style="left:552px;top:269px;width:88px;height:22px;background:#ffff80"><span>по ГОСТ</span></div>
<div class="gc c" style="left:640px;top:269px;width:90px;height:22px;background:#ffff80"><span>Выполняется</span></div>
<div class="gc c" style="left:20px;top:291px;width:40px;height:22px;background:#ff8080"><span>4</span></div>
<div class="gc l" style="left:60px;top:291px;width:80px;height:22px;background:#ff8080"><span>29.07.2017</span></div>
<div class="gc l" style="left:140px;top:291px;width:199px;height:22px;background:#ff8080"><span>Согласование спецификации</span></div>
<div class="gc c" style="left:339px;top:291px;width:40px;height:22px;background:#ff8080"><span>1</span></div>
<div class="gc l" style="left:379px;top:291px;width:120px;height:22px;background:#ff8080"><span>НИОКР</span></div>
<div class="gc c" style="left:499px;top:291px;width:53px;height:22px;background:#ff8080"><span>1</span></div>
<div class="gc l" style="left:552px;top:291px;width:88px;height:22px;background:#ff8080"><span></span></div>
<div class="gc c" style="left:640px;top:291px;width:90px;height:22px;background:#ff8080"><span>Ожидает</span></div>
<div class="gc c" style="left:20px;top:313px;width:40px;height:22px;background:#ff8080"><span>5</span></div>
<div class="gc l" style="left:60px;top:313px;width:80px;height:22px;background:#ff8080"><span>30.07.2017</span></div>
<div class="gc l" style="left:140px;top:313px;width:199px;height:22px;background:#ff8080"><span>Разработка проекта</span></div>
<div class="gc c" style="left:339px;top:313px;width:40px;height:22px;background:#ff8080"><span>3</span></div>
<div class="gc l" style="left:379px;top:313px;width:120px;height:22px;background:#ff8080"><span>НИОКР</span></div>
<div class="gc c" style="left:499px;top:313px;width:53px;height:22px;background:#ff8080"><span>1</span></div>
<div class="gc l" style="left:552px;top:313px;width:88px;height:22px;background:#ff8080"><span></span></div>
<div class="gc c" style="left:640px;top:313px;width:90px;height:22px;background:#ff8080"><span>Ожидает</span></div>
<div class="gc c" style="left:20px;top:335px;width:40px;height:22px;background:#ff8080"><span>6</span></div>
<div class="gc l" style="left:60px;top:335px;width:80px;height:22px;background:#ff8080"><span>30.07.2017</span></div>
<div class="gc l" style="left:140px;top:335px;width:199px;height:22px;background:#ff8080"><span>Согласование проекта</span></div>
<div class="gc c" style="left:339px;top:335px;width:40px;height:22px;background:#ff8080"><span>2</span></div>
<div class="gc l" style="left:379px;top:335px;width:120px;height:22px;background:#ff8080"><span>НИОКР</span></div>
<div class="gc c" style="left:499px;top:335px;width:53px;height:22px;background:#ff8080"><span>2</span></div>
<div class="gc l" style="left:552px;top:335px;width:88px;height:22px;background:#ff8080"><span></span></div>
<div class="gc c" style="left:640px;top:335px;width:90px;height:22px;background:#ff8080"><span>Ожидает</span></div>
<div class="gc c" style="left:20px;top:357px;width:40px;height:22px;background:#ff8080"><span>7</span></div>
<div class="gc l" style="left:60px;top:357px;width:80px;height:22px;background:#ff8080"><span>30.07.2017</span></div>
<div class="gc l" style="left:140px;top:357px;width:199px;height:22px;background:#ff8080"><span>Разработка ведомости покупных</span></div>
<div class="gc c" style="left:339px;top:357px;width:40px;height:22px;background:#ff8080"><span>1</span></div>
<div class="gc l" style="left:379px;top:357px;width:120px;height:22px;background:#ff8080"><span>НИОКР</span></div>
<div class="gc c" style="left:499px;top:357px;width:53px;height:22px;background:#ff8080"><span>2</span></div>
<div class="gc l" style="left:552px;top:357px;width:88px;height:22px;background:#ff8080"><span></span></div>
<div class="gc c" style="left:640px;top:357px;width:90px;height:22px;background:#ff8080"><span>Ожидает</span></div>
<div class="wstat" style="left:18px;top:453px;width:766px;height:21px;"></div>
<span class="tx t12s" style="left:22px;top:457px;letter-spacing:-0.149px;">Всего:&nbsp; 7</span>
<div class="win inact" style="left:555px;top:487px;width:705px;height:244px;"></div>
<span class="tx wt" style="left:567px;top:498px;letter-spacing:-0.198px;">График платежей</span>
<div style="left:1222px;top:497px;width:28px;height:15px"><svg width="28" height="15" viewBox="0 0 28 15" ><rect x="0.5" y="0.5" width="27" height="14" rx="2.2" fill="url(#gCloseIn)" stroke="#8690ae" stroke-width="1"/><rect x="1.5" y="1.5" width="25" height="12" rx="1.5" fill="none" stroke="#e4ebf4" stroke-width="1" opacity=".7"/><path d="M8.7 3.5000000000000004 L18.5 11.3 M18.5 3.5000000000000004 L8.7 11.3" stroke="#666e7a" stroke-width="4.0" stroke-linecap="butt"/><path d="M9.2 3.9000000000000004 L18.0 10.9 M18.0 3.9000000000000004 L9.2 10.9" stroke="#fafbfd" stroke-width="2.1" stroke-linecap="butt"/></svg></div>
<div class="client" style="left:563px;top:515px;width:689px;height:208px;"></div>
<div class="wtb" style="left:563px;top:515px;width:689px;height:39px;"></div>
<div class="grip" style="left:566px;top:519px;height:26px"></div>
<div style="left:578px;top:519px;width:34px;height:32px"><svg width="34" height="32" viewBox="0 0 34 32" ><path d="M0.5 0.5 H16.5 L23.7 7.5 V29.3 H0.5 Z" fill="url(#gDoc)" stroke="#3a8ad8" stroke-width=".7"/><path d="M1.2 1 V28.8" stroke="#2f7fd0" stroke-width=".6" opacity=".6"/><path d="M16.5 0.5 Q17.6 5 16 7.8 Q19.5 6.6 23.7 7.5 Z" fill="#bfe0fa" stroke="#8cc0ee" stroke-width=".5"/><path d="M16.2 8.3 Q20 7.4 23.5 8.3 L23.5 9.5 Q20 8.3 16.2 8.3Z" fill="#7fb0e0" opacity=".5"/><g transform="translate(12.9,14.4) scale(1)"><path d="M0 0.8 Q7 -1 14.4 0.8 L14.4 2.4 L9.2 8 V13.2 L6 14.4 V8 L0 2.4 Z" fill="url(#gFun)" stroke="#1f7ab0" stroke-width=".7" stroke-linejoin="round"/><path d="M1 1.4 Q7 0 13.4 1.4 Q7 2.8 1 1.4Z" fill="#bfeaff"/><path d="M7 8 V13.4" stroke="#9fdcff" stroke-width=".9"/></g></svg></div>
<div style="left:620px;top:519px;width:34px;height:32px"><svg width="34" height="32" viewBox="0 0 34 32" ><path d="M0.5 0.5 H16.5 L23.7 7.5 V29.3 H0.5 Z" fill="url(#gDoc)" stroke="#3a8ad8" stroke-width=".7"/><path d="M1.2 1 V28.8" stroke="#2f7fd0" stroke-width=".6" opacity=".6"/><path d="M16.5 0.5 Q17.6 5 16 7.8 Q19.5 6.6 23.7 7.5 Z" fill="#bfe0fa" stroke="#8cc0ee" stroke-width=".5"/><path d="M16.2 8.3 Q20 7.4 23.5 8.3 L23.5 9.5 Q20 8.3 16.2 8.3Z" fill="#7fb0e0" opacity=".5"/><path d="M20.375999999999998 22.776000000000003L25.976 28.376000000000005" stroke="#46287e" stroke-width="3.2" stroke-linecap="round"/><path d="M20.676 22.476000000000003L25.976 27.776000000000003" stroke="#7c5cc0" stroke-width="1" stroke-linecap="round"/><circle cx="16.2" cy="18.6" r="5.8" fill="url(#gLens)" stroke="#a9a4dc" stroke-width="1.5"/><circle cx="16.2" cy="18.6" r="6.5" fill="none" stroke="#7d78c0" stroke-width=".5"/></svg></div>
<div style="left:656px;top:519px;width:34px;height:32px"><svg width="34" height="32" viewBox="0 0 34 32" ><path d="M0.5 0.5 H16.5 L23.7 7.5 V29.3 H0.5 Z" fill="url(#gDoc)" stroke="#3a8ad8" stroke-width=".7"/><path d="M1.2 1 V28.8" stroke="#2f7fd0" stroke-width=".6" opacity=".6"/><path d="M16.5 0.5 Q17.6 5 16 7.8 Q19.5 6.6 23.7 7.5 Z" fill="#bfe0fa" stroke="#8cc0ee" stroke-width=".5"/><path d="M16.2 8.3 Q20 7.4 23.5 8.3 L23.5 9.5 Q20 8.3 16.2 8.3Z" fill="#7fb0e0" opacity=".5"/><path d="M13.5 12.7 H20 L22.5 15 V19 H13.5 Z" fill="#dfeafc" stroke="#8a93b0" stroke-width=".7"/><path d="M10.5 19 Q10.5 17.3 12.2 17.3 H24 Q25.8 17.3 25.8 19 V24.5 H10.5 Z" fill="#d4d6dc" stroke="#6e7280" stroke-width=".8"/><path d="M11 21.8 H25.4 V24.5 H11 Z" fill="#a9acb8"/><path d="M13 22.3 H23.3 V26.8 H13 Z" fill="#fff" stroke="#8a8f9c" stroke-width=".7"/><path d="M14.5 24h7.5M14.5 25.4h7.5" stroke="#9fb0d0" stroke-width=".6"/></svg></div>
<div style="left:698px;top:519px;width:34px;height:32px"><svg width="34" height="32" viewBox="0 0 34 32" ><path d="M0.5 0.5 H16.5 L23.7 7.5 V29.3 H0.5 Z" fill="url(#gDoc)" stroke="#3a8ad8" stroke-width=".7"/><path d="M1.2 1 V28.8" stroke="#2f7fd0" stroke-width=".6" opacity=".6"/><path d="M16.5 0.5 Q17.6 5 16 7.8 Q19.5 6.6 23.7 7.5 Z" fill="#bfe0fa" stroke="#8cc0ee" stroke-width=".5"/><path d="M16.2 8.3 Q20 7.4 23.5 8.3 L23.5 9.5 Q20 8.3 16.2 8.3Z" fill="#7fb0e0" opacity=".5"/><circle cx="18.7" cy="21.6" r="8.3" fill="url(#gGreen2)" stroke="#2a8a1a" stroke-width="1.3"/><path d="M13.181999999999999 21.6H24.218M18.7 16.082V27.118000000000002" stroke="#fff" stroke-width="2.8"/></svg></div>
<div style="left:734px;top:519px;width:34px;height:32px"><svg width="34" height="32" viewBox="0 0 34 32" ><path d="M0.5 0.5 H16.5 L23.7 7.5 V29.3 H0.5 Z" fill="url(#gDoc)" stroke="#3a8ad8" stroke-width=".7"/><path d="M1.2 1 V28.8" stroke="#2f7fd0" stroke-width=".6" opacity=".6"/><path d="M16.5 0.5 Q17.6 5 16 7.8 Q19.5 6.6 23.7 7.5 Z" fill="#bfe0fa" stroke="#8cc0ee" stroke-width=".5"/><path d="M16.2 8.3 Q20 7.4 23.5 8.3 L23.5 9.5 Q20 8.3 16.2 8.3Z" fill="#7fb0e0" opacity=".5"/><path d="M8.9 29.1 L10.6 25.2 L24.6 13 L27 15.3 L13 27.8 Z" fill="#f6d83a" stroke="#6a5a2a" stroke-width=".7" stroke-linejoin="round"/><path d="M8.9 29.1 L10.6 25.2 L24.6 13 L25.4 13.8 L11.4 26.3 Z" fill="#3a3a3a" opacity=".75"/><path d="M24.6 13 L25.8 12 L28.2 14.3 L27 15.3 Z" fill="#f0962a" stroke="#a0601a" stroke-width=".4"/><path d="M8.9 29.1 L10.6 25.2 L13 27.8 Z" fill="#f4e4c0" stroke="#6a5a2a" stroke-width=".5"/><path d="M8.9 29.1 l.7 -1.6 l1 1 z" fill="#222"/></svg></div>
<div style="left:770px;top:519px;width:34px;height:32px"><svg width="34" height="32" viewBox="0 0 34 32" ><path d="M0.5 0.5 H16.5 L23.7 7.5 V29.3 H0.5 Z" fill="url(#gDoc)" stroke="#3a8ad8" stroke-width=".7"/><path d="M1.2 1 V28.8" stroke="#2f7fd0" stroke-width=".6" opacity=".6"/><path d="M16.5 0.5 Q17.6 5 16 7.8 Q19.5 6.6 23.7 7.5 Z" fill="#bfe0fa" stroke="#8cc0ee" stroke-width=".5"/><path d="M16.2 8.3 Q20 7.4 23.5 8.3 L23.5 9.5 Q20 8.3 16.2 8.3Z" fill="#7fb0e0" opacity=".5"/><circle cx="18.3" cy="21.4" r="8.3" fill="url(#gRed2)" stroke="#8c1014" stroke-width="1.3"/><circle cx="18.3" cy="21.4" r="7.1000000000000005" fill="none" stroke="#ffd0d0" stroke-width=".7" opacity=".7"/><text x="18.3" y="25.0" text-anchor="middle" font-family="Liberation Sans,sans-serif" font-weight="bold" font-size="13" fill="#fff">x</text></svg></div>
<div class="tsep" style="left:611px;top:520px;height:28px"></div>
<div class="tsep" style="left:689px;top:520px;height:28px"></div>
<div class="grid" style="left:563px;top:554px;width:689px;height:148px;"></div>
<div class="ghdr" style="left:565px;top:556px;width:670px;height:33px;"></div>
<div class="gh two" style="left:565px;top:556px;width:40px;height:31px"><span>№<br>п/п</span></div>
<div class="gh" style="left:605px;top:556px;width:180px;height:31px"><span>Наименование платежа</span></div>
<div class="gh" style="left:785px;top:556px;width:150px;height:31px"><span>Статья затрат</span></div>
<div class="gh" style="left:935px;top:556px;width:100px;height:31px"><span>Периодичность</span></div>
<div class="gh two" style="left:1035px;top:556px;width:70px;height:31px"><span>Дата<br>платежа</span></div>
<div class="gh two" style="left:1105px;top:556px;width:70px;height:31px"><span>Сумма<br>платежа</span></div>
<div class="gh" style="left:1175px;top:556px;width:60px;height:31px"><span>Валюта</span></div>
<div class="gc c" style="left:565px;top:589px;width:40px;height:22px;background:#fff"><span>1</span></div>
<div class="gc l" style="left:605px;top:589px;width:180px;height:22px;background:#fff"><span>Аренда</span></div>
<div class="gc l" style="left:785px;top:589px;width:150px;height:22px;background:#fff"><span>3</span></div>
<div class="gc c" style="left:935px;top:589px;width:100px;height:22px;background:#fff"><span>ежегодно</span></div>
<div class="gc c" style="left:1035px;top:589px;width:70px;height:22px;background:#fff"><span>08.10</span></div>
<div class="gc r" style="left:1105px;top:589px;width:70px;height:22px;background:#fff"><span>300,00</span></div>
<div class="gc c" style="left:1175px;top:589px;width:60px;height:22px;background:#fff"><span>RUB</span></div>
<div class="gc c" style="left:565px;top:611px;width:40px;height:22px;background:#fff"><span>2</span></div>
<div class="gc l" style="left:605px;top:611px;width:180px;height:22px;background:#fff"><span>Бензин</span></div>
<div class="gc l" style="left:785px;top:611px;width:150px;height:22px;background:#fff"><span>2</span></div>
<div class="gc c" style="left:935px;top:611px;width:100px;height:22px;background:#fff"><span>ежемесячно</span></div>
<div class="gc c" style="left:1035px;top:611px;width:70px;height:22px;background:#fff"><span>10</span></div>
<div class="gc r" style="left:1105px;top:611px;width:70px;height:22px;background:#fff"><span>200,00</span></div>
<div class="gc c" style="left:1175px;top:611px;width:60px;height:22px;background:#fff"><span>RUB</span></div>
<div class="gc c sel2" style="left:565px;top:633px;width:40px;height:22px;background:#3399ff"><span>3</span></div>
<div class="gc l sel2" style="left:605px;top:633px;width:180px;height:22px;background:#3399ff"><span>Электроэнергия</span></div>
<div class="gc l sel2" style="left:785px;top:633px;width:150px;height:22px;background:#3399ff"><span>1</span></div>
<div class="gc c sel2" style="left:935px;top:633px;width:100px;height:22px;background:#3399ff"><span>однократно</span></div>
<div class="gc c sel2" style="left:1035px;top:633px;width:70px;height:22px;background:#3399ff"><span>12.10.2017</span></div>
<div class="gc r sel2" style="left:1105px;top:633px;width:70px;height:22px;background:#3399ff"><span>100,00</span></div>
<div class="gc c sel2" style="left:1175px;top:633px;width:60px;height:22px;background:#3399ff"><span>RUB</span></div>
<div class="wstat" style="left:563px;top:702px;width:689px;height:21px;"></div>
<span class="tx t12s" style="left:567px;top:706px;letter-spacing:-0.114px;">Итого на сумму:&nbsp; 600,00</span>
<div class="win inact2" style="left:80px;top:521px;width:390px;height:171px;"></div>
<span class="tx wt" style="left:88px;top:527px;letter-spacing:-0.122px;">Поступления от поставщиков</span>
<div style="left:421px;top:521px;width:42px;height:17px"><svg width="42" height="17" viewBox="0 0 42 17" ><path d="M0.5 0 V12 Q0.5 16.5 5 16.5 H37 Q41.5 16.5 41.5 12 V0" fill="url(#gCloseIn2)" stroke="#5f6874" stroke-width="1"/><path d="M1.5 0 V12 Q1.5 15.5 5 15.5 H37 Q40.5 15.5 40.5 12 V0" fill="none" stroke="#eef2f7" stroke-width="1" opacity=".8"/><path d="M16.5 3.8999999999999995 L26.9 12.5 M26.9 3.8999999999999995 L16.5 12.5" stroke="#4c545e" stroke-width="4.2" stroke-linecap="butt"/><path d="M17.0 4.3 L26.4 12.1 M26.4 4.3 L17.0 12.1" stroke="#fbfcfd" stroke-width="2.3" stroke-linecap="butt"/></svg></div>
<div class="client bord" style="left:86px;top:547px;width:377px;height:139px;"></div>
<div class="wtb2" style="left:87px;top:548px;width:375px;height:38px;"></div>
<div class="grip" style="left:90px;top:552px;height:26px"></div>
<div style="left:102px;top:552px;width:34px;height:32px"><svg width="34" height="32" viewBox="0 0 34 32" ><path d="M0.5 0.5 H16.5 L23.7 7.5 V29.3 H0.5 Z" fill="url(#gDoc)" stroke="#3a8ad8" stroke-width=".7"/><path d="M1.2 1 V28.8" stroke="#2f7fd0" stroke-width=".6" opacity=".6"/><path d="M16.5 0.5 Q17.6 5 16 7.8 Q19.5 6.6 23.7 7.5 Z" fill="#bfe0fa" stroke="#8cc0ee" stroke-width=".5"/><path d="M16.2 8.3 Q20 7.4 23.5 8.3 L23.5 9.5 Q20 8.3 16.2 8.3Z" fill="#7fb0e0" opacity=".5"/><path d="M10.1 12.8 H24.6 Q25.9 12.8 25.9 14 V28.1 H11.6 L10.1 26.6 Z" fill="#3f7fe0" stroke="#1d4fa8" stroke-width=".8"/><path d="M12.6 13.3 H23.4 V19.3 H12.6 Z" fill="#eaf2ff"/><path d="M21.2 13.8 h1.4 v4.6 h-1.4z" fill="#3f7fe0"/><path d="M12.4 21.2 H23.6 V27.7 H12.4 Z" fill="#e4e8f0" stroke="#5a6a90" stroke-width=".5"/><path d="M13.6 23.2 H22.4 M13.6 25.6 H22.4" stroke="#6cc83a" stroke-width="1.4"/></svg></div>
<div style="left:144px;top:552px;width:34px;height:32px"><svg width="34" height="32" viewBox="0 0 34 32" ><path d="M0.5 0.5 H16.5 L23.7 7.5 V29.3 H0.5 Z" fill="url(#gDoc)" stroke="#3a8ad8" stroke-width=".7"/><path d="M1.2 1 V28.8" stroke="#2f7fd0" stroke-width=".6" opacity=".6"/><path d="M16.5 0.5 Q17.6 5 16 7.8 Q19.5 6.6 23.7 7.5 Z" fill="#bfe0fa" stroke="#8cc0ee" stroke-width=".5"/><path d="M16.2 8.3 Q20 7.4 23.5 8.3 L23.5 9.5 Q20 8.3 16.2 8.3Z" fill="#7fb0e0" opacity=".5"/><path d="M20.375999999999998 22.776000000000003L25.976 28.376000000000005" stroke="#46287e" stroke-width="3.2" stroke-linecap="round"/><path d="M20.676 22.476000000000003L25.976 27.776000000000003" stroke="#7c5cc0" stroke-width="1" stroke-linecap="round"/><circle cx="16.2" cy="18.6" r="5.8" fill="url(#gLens)" stroke="#a9a4dc" stroke-width="1.5"/><circle cx="16.2" cy="18.6" r="6.5" fill="none" stroke="#7d78c0" stroke-width=".5"/></svg></div>
<div style="left:180px;top:552px;width:34px;height:32px"><svg width="34" height="32" viewBox="0 0 34 32" ><path d="M0.5 0.5 H16.5 L23.7 7.5 V29.3 H0.5 Z" fill="url(#gDoc)" stroke="#3a8ad8" stroke-width=".7"/><path d="M1.2 1 V28.8" stroke="#2f7fd0" stroke-width=".6" opacity=".6"/><path d="M16.5 0.5 Q17.6 5 16 7.8 Q19.5 6.6 23.7 7.5 Z" fill="#bfe0fa" stroke="#8cc0ee" stroke-width=".5"/><path d="M16.2 8.3 Q20 7.4 23.5 8.3 L23.5 9.5 Q20 8.3 16.2 8.3Z" fill="#7fb0e0" opacity=".5"/><path d="M13.5 12.7 H20 L22.5 15 V19 H13.5 Z" fill="#dfeafc" stroke="#8a93b0" stroke-width=".7"/><path d="M10.5 19 Q10.5 17.3 12.2 17.3 H24 Q25.8 17.3 25.8 19 V24.5 H10.5 Z" fill="#d4d6dc" stroke="#6e7280" stroke-width=".8"/><path d="M11 21.8 H25.4 V24.5 H11 Z" fill="#a9acb8"/><path d="M13 22.3 H23.3 V26.8 H13 Z" fill="#fff" stroke="#8a8f9c" stroke-width=".7"/><path d="M14.5 24h7.5M14.5 25.4h7.5" stroke="#9fb0d0" stroke-width=".6"/></svg></div>
<div style="left:216px;top:552px;width:34px;height:32px"><svg width="34" height="32" viewBox="0 0 34 32" ><path d="M0.5 0.5 H16.5 L23.7 7.5 V29.3 H0.5 Z" fill="url(#gDoc)" stroke="#3a8ad8" stroke-width=".7"/><path d="M1.2 1 V28.8" stroke="#2f7fd0" stroke-width=".6" opacity=".6"/><path d="M16.5 0.5 Q17.6 5 16 7.8 Q19.5 6.6 23.7 7.5 Z" fill="#bfe0fa" stroke="#8cc0ee" stroke-width=".5"/><path d="M16.2 8.3 Q20 7.4 23.5 8.3 L23.5 9.5 Q20 8.3 16.2 8.3Z" fill="#7fb0e0" opacity=".5"/><circle cx="18.8" cy="21.1" r="7.5" fill="#ee3a36" stroke="#7a7a8a" stroke-width=".6"/><path d="M18.8 21.1 L19.6 13.600000000000001 A7.5 7.5 0 0 1 25.7 24.1 Z" fill="#4a9ae8"/><path d="M18.8 21.1 L25.7 24.1 A7.5 7.5 0 0 1 11.5 22.6 Z" fill="#7ad03a"/><path d="M19.6 13.600000000000001L18.8 21.1L25.7 24.1M18.8 21.1L11.5 22.6" stroke="#fff" stroke-width=".9" fill="none"/></svg></div>
<div class="tsep" style="left:135px;top:553px;height:28px"></div>
<div class="gbox" style="left:100px;top:597px;width:349px;height:75px;"></div>
<span class="tx t11" style="left:105px;top:590px;background:#f0f0f0;padding:0 3px">Период поиска</span>
<span class="tx t11" style="left:121px;top:617px;letter-spacing:-0.174px;">Начало периода:</span>
<span class="tx t11" style="left:120.5px;top:643px;letter-spacing:-0.041px;">Окончание периода:</span>
<div class="inp" style="left:234px;top:616px;width:196px;height:19px;"></div>
<span class="tx t11" style="left:242px;top:618px;">1</span>
<span class="tx t11" style="left:255.3px;top:618px;">января</span>
<span class="tx t11" style="left:300.6px;top:618px;letter-spacing:.1px">2015 г.</span>
<div style="left:403px;top:620px;width:24px;height:13px"><svg width="24" height="13" viewBox="0 0 24 13" ><rect x="1.6" y="1.6" width="10" height="11" rx="1.2" fill="#b8b0b0" opacity=".6"/><rect x="0.6" y="0.6" width="10" height="11" rx="1.4" fill="#dfe4f4" stroke="#7c6c6c" stroke-width="1"/><rect x="2.6" y="3.6" width="1.6" height="1.6" fill="#a4a8ba"/><rect x="2.6" y="6.0" width="1.6" height="1.6" fill="#a4a8ba"/><rect x="2.6" y="8.4" width="1.6" height="1.6" fill="#a4a8ba"/><rect x="5.0" y="3.6" width="1.6" height="1.6" fill="#a4a8ba"/><rect x="5.0" y="6.0" width="1.6" height="1.6" fill="#a4a8ba"/><rect x="5.0" y="8.4" width="1.6" height="1.6" fill="#a4a8ba"/><rect x="7.4" y="3.6" width="1.6" height="1.6" fill="#a4a8ba"/><rect x="7.4" y="6.0" width="1.6" height="1.6" fill="#a4a8ba"/><rect x="7.4" y="8.4" width="1.6" height="1.6" fill="#a4a8ba"/><path d="M13 4.3 H20.2 L16.6 8.4 Z" fill="#3a4a7a"/></svg></div>
<div class="inp" style="left:234px;top:642px;width:196px;height:19px;"></div>
<span class="tx t11" style="left:242px;top:644px;">1</span>
<span class="tx t11" style="left:253.5px;top:644px;">октября</span>
<span class="tx t11" style="left:300.6px;top:644px;letter-spacing:.1px">2017 г.</span>
<div style="left:403px;top:646px;width:24px;height:13px"><svg width="24" height="13" viewBox="0 0 24 13" ><rect x="1.6" y="1.6" width="10" height="11" rx="1.2" fill="#b8b0b0" opacity=".6"/><rect x="0.6" y="0.6" width="10" height="11" rx="1.4" fill="#dfe4f4" stroke="#7c6c6c" stroke-width="1"/><rect x="2.6" y="3.6" width="1.6" height="1.6" fill="#a4a8ba"/><rect x="2.6" y="6.0" width="1.6" height="1.6" fill="#a4a8ba"/><rect x="2.6" y="8.4" width="1.6" height="1.6" fill="#a4a8ba"/><rect x="5.0" y="3.6" width="1.6" height="1.6" fill="#a4a8ba"/><rect x="5.0" y="6.0" width="1.6" height="1.6" fill="#a4a8ba"/><rect x="5.0" y="8.4" width="1.6" height="1.6" fill="#a4a8ba"/><rect x="7.4" y="3.6" width="1.6" height="1.6" fill="#a4a8ba"/><rect x="7.4" y="6.0" width="1.6" height="1.6" fill="#a4a8ba"/><rect x="7.4" y="8.4" width="1.6" height="1.6" fill="#a4a8ba"/><path d="M13 4.3 H20.2 L16.6 8.4 Z" fill="#3a4a7a"/></svg></div>
<div class="win act" style="left:763px;top:132px;width:480px;height:318px;"></div>
<span class="tx wt" style="left:771px;top:139px;letter-spacing:-0.217px;color:#000;text-shadow:0 0 5px #fff,0 0 8px rgba(255,255,255,.8)">Диаграмма</span>
<div style="left:1194px;top:133px;width:43px;height:18px"><svg width="43" height="18" viewBox="0 0 43 18" ><path d="M0.5 0 V13 Q0.5 17.5 5 17.5 H38 Q42.5 17.5 42.5 13 V0 Z" fill="url(#gCloseRed)" stroke="#4a1a14" stroke-width="1"/><path d="M1.5 0.5 V13 Q1.5 16.5 5 16.5 H38 Q41.5 16.5 41.5 13 V0.5" fill="none" stroke="#f4c0b4" stroke-width="1" opacity=".7"/><path d="M16.9 3.8999999999999995 L26.9 12.3 M26.9 3.8999999999999995 L16.9 12.3" stroke="#5a3434" stroke-width="4.4" stroke-linecap="butt"/><path d="M17.4 4.3 L26.4 11.9 M26.4 4.3 L17.4 11.9" stroke="#ffffff" stroke-width="2.5" stroke-linecap="butt"/></svg></div>
<div class="client bord" style="left:770px;top:159px;width:466px;height:284px;background:#fff"></div>
<div style="left:771px;top:160px;width:464px;height:282px"><svg width="463" height="281" viewBox="0 0 463 281" ><path d="M141.29999999999995 141.2 L141.30 12.50 A128.7 128.7 0 1 1 54.18 235.93 Z" fill="#ff0000" stroke="#000" stroke-width="1" stroke-linejoin="round"/><path d="M141.29999999999995 141.2 L54.18 235.93 A128.7 128.7 0 0 1 40.25 61.49 Z" fill="#008000" stroke="#000" stroke-width="1" stroke-linejoin="round"/><path d="M141.29999999999995 141.2 L40.25 61.49 A128.7 128.7 0 0 1 133.64 12.73 Z" fill="#ffff00" stroke="#000" stroke-width="1" stroke-linejoin="round"/><path d="M141.29999999999995 141.2 L133.64 12.73 A128.7 128.7 0 0 1 139.80 12.51 Z" fill="#0000ff" stroke="#000" stroke-width="1" stroke-linejoin="round"/><path d="M141.29999999999995 141.2 L139.80 12.51 A128.7 128.7 0 0 1 141.04 12.50 Z" fill="#ff00ff" stroke="#000" stroke-width="1" stroke-linejoin="round"/><path d="M141.29999999999995 141.2 L141.04 12.50 A128.7 128.7 0 0 1 141.28 12.50 Z" fill="#00ff00" stroke="#000" stroke-width="1" stroke-linejoin="round"/><path d="M141.29999999999995 141.2 L141.28 12.50 A128.7 128.7 0 0 1 141.30 12.50 Z" fill="#ffa500" stroke="#000" stroke-width="1" stroke-linejoin="round"/><path d="M141.29999999999995 141.2 L141.30 12.50 A128.7 128.7 0 0 1 141.30 12.50 Z" fill="#808080" stroke="#000" stroke-width="1" stroke-linejoin="round"/><text x="373.70000000000005" y="28.5" text-anchor="middle" font-size="11.2" font-family="Liberation Sans,sans-serif">Легенда</text><rect x="284" y="37" width="13" height="12" fill="#ff0000"/><text x="312.5999999999999" y="48" font-size="11" textLength="128.8" lengthAdjust="spacing" font-family="Liberation Sans,sans-serif">Бурый Медведь - 4054,05</text><rect x="284" y="53" width="13" height="12" fill="#008000"/><text x="312.5999999999999" y="64" font-size="11" textLength="141.4" lengthAdjust="spacing" font-family="Liberation Sans,sans-serif">Промэлектроника - 1560,05</text><rect x="284" y="69" width="13" height="12" fill="#ffff00"/><text x="312.5999999999999" y="80" font-size="11" textLength="81.5" lengthAdjust="spacing" font-family="Liberation Sans,sans-serif">Компэл - 880,00</text><rect x="284" y="85" width="13" height="12" fill="#0000ff"/><text x="312.5999999999999" y="96" font-size="11" textLength="73.4" lengthAdjust="spacing" font-family="Liberation Sans,sans-serif">Платан - 50,00</text><rect x="284" y="101" width="13" height="12" fill="#ff00ff"/><text x="312.5999999999999" y="112" font-size="11" textLength="70.8" lengthAdjust="spacing" font-family="Liberation Sans,sans-serif">Farnell - 10,04</text><rect x="284" y="117" width="13" height="12" fill="#00ff00"/><text x="312.5999999999999" y="128" font-size="11" textLength="83.2" lengthAdjust="spacing" font-family="Liberation Sans,sans-serif">Чип и Дип - 2,00</text><rect x="284" y="133" width="13" height="12" fill="#ffa500"/><text x="312.5999999999999" y="144" font-size="11" textLength="60.6" lengthAdjust="spacing" font-family="Liberation Sans,sans-serif">Терра - 0,11</text><rect x="284" y="149" width="13" height="12" fill="#808080"/><text x="312.5999999999999" y="160" font-size="11" textLength="68.3" lengthAdjust="spacing" font-family="Liberation Sans,sans-serif">Дельта - 0,03</text><rect x="460.4" y="278.4" width="1.3" height="1.3" fill="#b4b8c0"/><rect x="457.4" y="278.4" width="1.3" height="1.3" fill="#b4b8c0"/><rect x="460.4" y="275.4" width="1.3" height="1.3" fill="#b4b8c0"/><rect x="454.4" y="278.4" width="1.3" height="1.3" fill="#b4b8c0"/><rect x="457.4" y="275.4" width="1.3" height="1.3" fill="#b4b8c0"/><rect x="460.4" y="272.4" width="1.3" height="1.3" fill="#b4b8c0"/></svg></div>
<div id="statusbar"></div>
<span class="tx st" style="left:4.5px;top:752px;letter-spacing:-0.035px;">D:\Проекты\Компонент 2017\DB\Comp.mdb</span>
<div class="ssep" style="left:824px;top:749px"></div>
<div class="ssep" style="left:904px;top:749px"></div>
<div class="ssep" style="left:1044px;top:749px"></div>
<div class="ssep" style="left:1174px;top:749px"></div>
<div class="ssep" style="left:1264px;top:749px"></div>
<span class="tx st" style="left:854px;top:752px;letter-spacing:-0.750px;font-size:11.2px;transform:scale(1,1.1);transform-origin:left center">PRO</span>
<span class="tx st" style="left:932.5px;top:752px;letter-spacing:-0.210px;">Администратор</span>
<span class="tx st" style="left:1082.5px;top:752px;letter-spacing:-0.200px;font-size:11.2px;transform:scale(1,1.1);transform-origin:left center">12.10.2017</span>
<span class="tx st" style="left:1201px;top:752px;letter-spacing:-0.118px;font-size:11.2px;transform:scale(1,1.1);transform-origin:left center">1:34:07</span>
<div id="taskbar"></div>
<svg width="44" height="40" viewBox="0 0 44 40" style="left:8px;top:763px"><defs><radialGradient id="gOrbB" cx=".5" cy=".28" r=".75"><stop offset="0" stop-color="#a8d8f4"/><stop offset=".45" stop-color="#3a8cd0"/><stop offset=".8" stop-color="#155a9c"/><stop offset="1" stop-color="#2a9ad0"/></radialGradient></defs><circle cx="22" cy="22" r="20.5" fill="#05080c"/><circle cx="22" cy="22" r="18.6" fill="url(#gOrbB)" stroke="#7ec4ec" stroke-width="1.1"/><ellipse cx="22" cy="13" rx="14" ry="8.5" fill="#fff" opacity=".22"/><path d="M11.8 11.2 Q16.5 7.6 22.3 10.6 L20.2 19.6 Q15.2 17.2 9.8 20.2 Z" fill="#f2602c"/><path d="M23.4 11.4 Q28.6 14.6 35.2 12 L33 21.2 Q27 23.6 21.4 20.4 Z" fill="#8cc63c"/><path d="M9.4 21.8 Q14.6 19 19.8 21.4 L17.6 30.6 Q12.6 28 7.2 30.8 Z" fill="#3a9cec"/><path d="M21 22.2 Q26.4 25.4 32.6 22.8 L30.4 32.2 Q24.4 34.8 18.8 31.6 Z" fill="#fcc424"/></svg>
<div class="tgrip" style="left:64px;top:774px"></div>
<svg width="18" height="16" viewBox="0 0 18 16" style="left:80px;top:778px"><rect x="1" y="1" width="16" height="13" fill="#3a72cc" stroke="#b4c4dc" stroke-width="1.2"/><rect x="2" y="2" width="14" height="4" fill="#2a56a8"/><rect x="2" y="10.5" width="14" height="2.6" fill="#23262c"/><circle cx="4" cy="11.6" r="1.1" fill="#e8a030"/></svg><svg width="18" height="16" viewBox="0 0 18 16" style="left:103px;top:778px"><rect x="0.5" y="0.5" width="17" height="14" fill="#172f8c" stroke="#c9d4e4" stroke-width="1"/><rect x="2.5" y="2.5" width="6" height="3.6" fill="#f4f7fb"/><rect x="5.5" y="5.5" width="6" height="3.6" fill="#f4f7fb" stroke="#172f8c" stroke-width=".5"/><rect x="8.5" y="8.5" width="7" height="4" fill="#f4f7fb" stroke="#172f8c" stroke-width=".5"/><path d="M2.5 3h6M5.5 6h6M8.5 9h7" stroke="#2a9a8a" stroke-width="1"/></svg><svg width="17" height="17" viewBox="0 0 16 16" style="left:127px;top:777px"><rect x=".5" y=".5" width="15" height="15" rx="1.5" fill="#2f9ae8" stroke="#8fd8f8"/><rect x="2.5" y="2.5" width="11" height="11" rx="1" fill="#f59a1e"/><path d="M6 4.5 L11.5 8 L6 11.5 Z" fill="#fff"/></svg><svg width="16" height="16" viewBox="0 0 16 16" style="left:150px;top:777px"><path d="M1 1 H14 L15 2 V15 H1 Z" fill="#2a3fc0" stroke="#101c70" stroke-width=".6"/><rect x="3.5" y="1.5" width="8" height="5" fill="#e8ecf4"/><rect x="3" y="9" width="10" height="6" fill="#f4f4f4"/><path d="M4 10.5h8M4 12.5h8" stroke="#e03030" stroke-width="1"/></svg><svg width="18" height="16" viewBox="0 0 18 16" style="left:173px;top:778px"><rect x="4" y="1" width="13" height="10" fill="#c9d0dc" stroke="#5a6478"/><rect x="5.5" y="2.5" width="10" height="7" fill="#2f3fd0"/><rect x="7" y="12" width="7" height="2" fill="#9aa2b2"/><rect x="0.5" y="6" width="4" height="9" fill="#b9c0cc" stroke="#5a6478" stroke-width=".7"/></svg><svg width="16" height="16" viewBox="0 0 16 16" style="left:196px;top:777px"><circle cx="8" cy="8" r="7.3" fill="#e8601a"/><circle cx="8.8" cy="7" r="4.6" fill="#3a5fd0"/><path d="M1 7 Q1 14.5 8 15.3 Q14 15 15 9 Q12 13 8 12 Q4.5 11 5 7 Q3 5 3.5 2.5 Q1.5 4 1 7 Z" fill="#f9a01e"/></svg><svg width="18" height="16" viewBox="0 0 18 16" style="left:218px;top:777px"><ellipse cx="9" cy="8" rx="8.3" ry="3.4" fill="none" stroke="#f2c21a" stroke-width="1.3" transform="rotate(-28 9 8)"/><path d="M14.5 9.5 H6.2 Q6.6 12 9.2 12 Q10.8 12 11.4 11 H14.2 Q13 14.6 9.2 14.6 Q3.6 14.4 3.5 8.6 Q3.8 3.2 9.2 3 Q14.8 3.4 14.5 9.5 Z M6.2 7.3 H11.8 Q11.4 5.4 9 5.4 Q6.6 5.4 6.2 7.3 Z" fill="#2f9af0" fill-rule="evenodd"/></svg><svg width="16" height="16" viewBox="0 0 16 16" style="left:242px;top:777px"><circle cx="8" cy="8" r="7.5" fill="#e33b2e"/><path d="M8 8 L1.5 4.2 A7.5 7.5 0 0 0 5.2 15 Z" fill="#2da94f"/><path d="M8 8 L5.2 15 A7.5 7.5 0 0 0 15 5.2 L8 5.2 Z" fill="#fdd13a"/><circle cx="8" cy="8" r="3.5" fill="#fff"/><circle cx="8" cy="8" r="2.7" fill="#3f86f0"/></svg>
<div class="tgrip" style="left:275px;top:774px"></div>
<div class="tbtn" style="left:290px;top:772px;width:157px;height:27px"></div>
<div style="left:299px;top:777px;width:16px;height:16px"><svg width="16" height="16" viewBox="0 0 16 16" ><path d="M2 1.5 H10 L14 4 V15 H2 Z" fill="#e8c95a" stroke="#a8841e" stroke-width=".7"/><path d="M10 1.5 V15" stroke="#b8962a" stroke-width=".8"/><path d="M5 10 L8 5 L11 10 H9.2 V13 H6.8 V10 Z" fill="#3fb52a" stroke="#1f7d16" stroke-width=".5"/></svg></div>
<span class="tx tb" style="left:319px;top:778px;letter-spacing:-0.297px;font-size:11px;transform:scale(1,1.14);transform-origin:left center">32x32</span>
<div class="tbtn" style="left:451px;top:772px;width:157px;height:27px"></div>
<div style="left:460px;top:777px;width:16px;height:16px"><svg width="16" height="16" viewBox="0 0 16 16" ><rect x=".5" y="1.5" width="15" height="10" fill="#e9f2e4" stroke="#3a7a2a"/><rect x=".5" y="1.5" width="15" height="2.5" fill="#3f8f2f"/><text x="3" y="10.5" font-size="7.5" font-weight="bold" font-family="Liberation Sans,sans-serif" fill="#1f6f1a">c#</text><path d="M7 13 h6 l-2 -2 m2 2 l-2 2" stroke="#4a90e8" stroke-width="1.4" fill="none"/></svg></div>
<span class="tx tb" style="left:480px;top:778px;letter-spacing:-0.178px;">Comp (Выполнени...</span>
<div class="tbtn" style="left:611px;top:772px;width:157px;height:27px"></div>
<div style="left:620px;top:777px;width:16px;height:16px"><svg width="16" height="16" viewBox="0 0 16 16" ><circle cx="8" cy="8" r="7.5" fill="#e33b2e"/><path d="M8 8 L1.5 4.2 A7.5 7.5 0 0 0 5.2 15 Z" fill="#2da94f"/><path d="M8 8 L5.2 15 A7.5 7.5 0 0 0 15 5.2 L8 5.2 Z" fill="#fdd13a"/><circle cx="8" cy="8" r="3.5" fill="#fff"/><circle cx="8" cy="8" r="2.7" fill="#3f86f0"/></svg></div>
<span class="tx tb" style="left:640px;top:778px;letter-spacing:-0.335px;">Метод Form.Layout...</span>
<div class="tbtn on" style="left:771px;top:772px;width:157px;height:27px"></div>
<div style="left:780px;top:777px;width:16px;height:16px"><svg width="15" height="16" viewBox="1 0 15 16" ><path d="M1 3 V13 Q1 15.5 7.5 15.5 Q14 15.5 14 13 V3 Z" fill="#c9ccd0"/><path d="M1 6.8 Q1 9 7.5 9 Q14 9 14 6.8 M1 10.3 Q1 12.5 7.5 12.5 Q14 12.5 14 10.3" fill="none" stroke="#8e9298" stroke-width="1"/><ellipse cx="7.5" cy="3" rx="6.5" ry="2.3" fill="#eef0f2" stroke="#a9adb3" stroke-width=".5"/></svg></div>
<span class="tx tb" style="left:800px;top:778px;letter-spacing:-0.415px;">Компонент 2017</span>
<div class="tgrip" style="left:1073px;top:774px"></div>
<span class="tx tb" style="left:1090.5px;top:776px;letter-spacing:-0.241px;font-size:11px;transform:scale(1,1.06);transform-origin:left center">EN</span>
<svg width="8" height="10" viewBox="0 0 8 10" style="left:1120px;top:781px"><path d="M6 1 L2 5 L6 9" fill="none" stroke="#fff" stroke-width="2"/></svg>
<svg width="16" height="16" viewBox="0 0 16 16" style="left:1135px;top:777px"><path d="M8 0.5 L15.5 14.5 H0.5 Z" fill="#f58a1e" stroke="#c86a0a" stroke-width=".5"/><circle cx="8" cy="9.5" r="3.2" fill="#fff"/><path d="M6.5 11 L8 6.8 L9.5 11" stroke="#f58a1e" stroke-width="1.2" fill="none"/><circle cx="12.5" cy="3.5" r="2" fill="#e82a2a"/></svg><svg width="18" height="16" viewBox="0 0 18 16" style="left:1153px;top:776px"><path d="M4 3 Q1 8 4 13 M7 5 Q5.5 8 7 11" fill="none" stroke="#d8d02a" stroke-width="1.5"/><path d="M11 2 V10 M8 7 L11 11 L14 7" fill="none" stroke="#cfd02a" stroke-width="2"/><circle cx="13.5" cy="3" r="1.5" fill="#e8e8e8"/></svg><svg width="16" height="18" viewBox="0 0 16 18" style="left:1181px;top:775px"><rect x="2" y="3" width="7" height="13" rx="1" fill="#e8ece8" stroke="#7a807a"/><rect x="3.5" y="6" width="4" height="9" fill="#4fc02a"/><rect x="4" y="1" width="3" height="2" fill="#c9ccc9"/><path d="M11 4 V8 M14 4 V8 M10 8 H15 V11 Q12.5 14 10 11 Z M12.5 13 V17" stroke="#e8e8e8" stroke-width="1.2" fill="#bfc4bf"/></svg><svg width="18" height="18" viewBox="0 0 18 18" style="left:1199px;top:775px"><rect x="5" y="1" width="11" height="8" fill="#dfe8f4" stroke="#5a6a8a"/><rect x="6.5" y="2.5" width="8" height="5" fill="#2f7fe0"/><rect x="1" y="7" width="10" height="7" fill="#dfe8f4" stroke="#5a6a8a"/><rect x="2.5" y="8.5" width="7" height="4" fill="#3f8ff0"/><circle cx="13" cy="14" r="3.5" fill="#2f9ae8" stroke="#1a5ca8" stroke-width=".6"/><path d="M11 13 q2 -2 3.5 0 q-1 2.5 -2.5 2z" fill="#6fd04a"/></svg><svg width="18" height="16" viewBox="0 0 18 16" style="left:1217px;top:776px"><path d="M1 6 H4 L8.5 2 V14 L4 10 H1 Z" fill="#e8ece8" stroke="#9aa09a" stroke-width=".6"/><path d="M11 5.5 Q12.8 8 11 10.5 M13.5 3.5 Q16.5 8 13.5 12.5" fill="none" stroke="#4fd04a" stroke-width="1.3"/></svg>
<span class="tx tb" style="left:1242.5px;top:778px;letter-spacing:-0.520px;font-size:11.6px;transform:scale(1,1.08);transform-origin:left center">1:34</span>
</body></html>
